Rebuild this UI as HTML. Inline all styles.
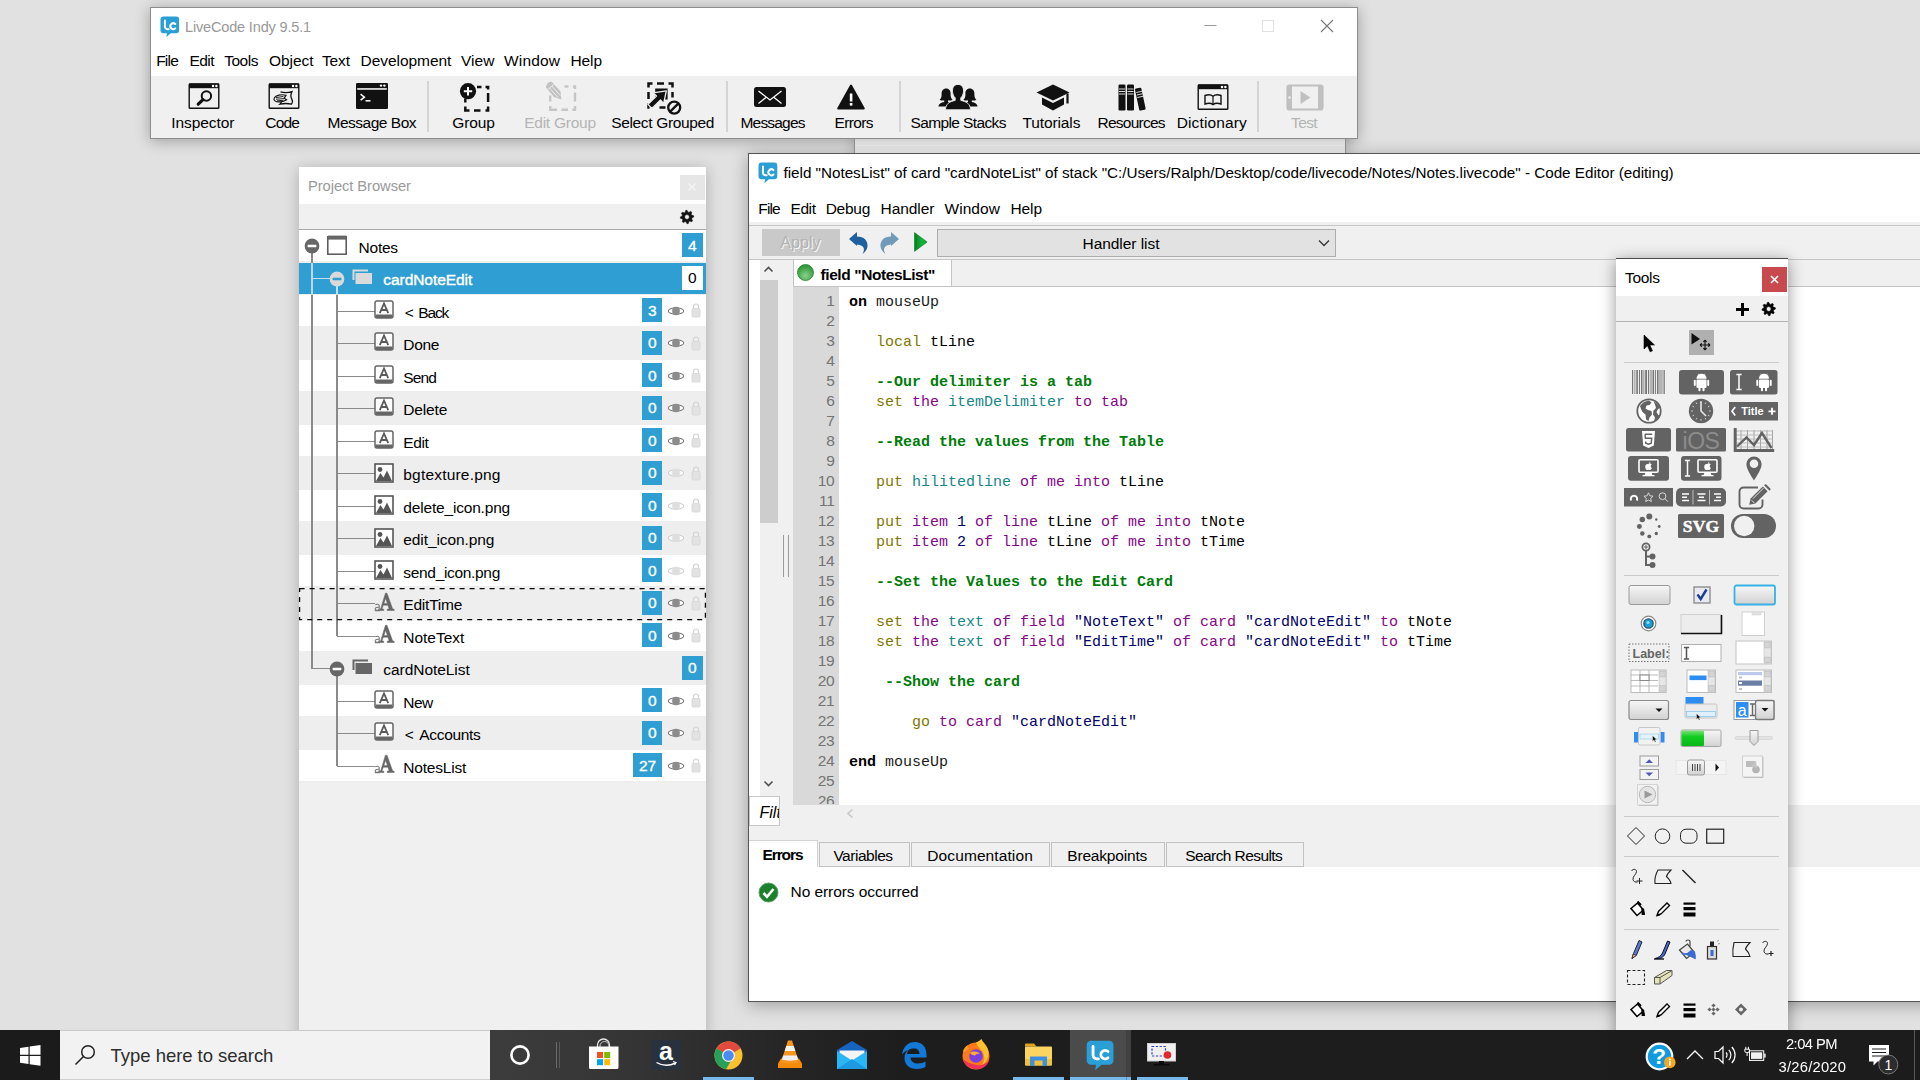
<!DOCTYPE html>
<html lang="en"><head><meta charset="utf-8"><title>LiveCode Indy 9.5.1</title>
<style>
html,body{margin:0;padding:0}
body{width:1920px;height:1080px;overflow:hidden;position:relative;background:#e1e1e1;font-family:"Liberation Sans",sans-serif}
div,span,svg{position:absolute;box-sizing:border-box}
.t{white-space:pre;font-family:"Liberation Sans",sans-serif}
.m{font-family:"Liberation Mono",monospace}
.w{overflow:hidden}
svg{overflow:visible}
</style></head>
<body>
<!-- background window -->
<div style="left:854px;top:120px;width:492px;height:40px;background:#dcdcdc;border:1px solid #8a8a8a;box-shadow:0 0 12px rgba(0,0,0,.2)"></div>
<div style="left:855px;top:145px;width:490px;height:1px;background:#e6e6e6"></div>
<!-- project browser -->
<div style="left:299px;top:167px;width:407px;height:870px;background:#f0f0f0;box-shadow:0 2px 14px rgba(0,0,0,.24)"></div>
<div style="left:299px;top:167px;width:407px;height:37px;background:#fff;"></div>
<span class="t" style="left:308.0px;top:176.9px;font-size:14.75px;line-height:18px;color:#9a9a9a;letter-spacing:-0.08px;">Project Browser</span>
<div style="left:680px;top:175px;width:25px;height:24.5px;background:#e6e6e6;"></div>
<svg style="left:686px;top:181px" width="12" height="12" viewBox="0 0 12 12"><path d="M2.5 2.5l7 7M9.5 2.5l-7 7" stroke="#f6f6f6" stroke-width="1.3"/></svg>
<div style="left:299px;top:229px;width:407px;height:1px;background:#a8a8a8;"></div>
<svg style="left:0;top:0" width="1" height="1"><path d="M693.57,215.69L693.70,217.00L691.86,217.97L691.58,218.90L692.57,220.72L691.74,221.74L689.75,221.12L688.90,221.58L688.31,223.57L687.00,223.70L686.03,221.86L685.10,221.58L683.28,222.57L682.26,221.74L682.88,219.75L682.42,218.90L680.43,218.31L680.30,217.00L682.14,216.03L682.42,215.10L681.43,213.28L682.26,212.26L684.25,212.88L685.10,212.42L685.69,210.43L687.00,210.30L687.97,212.14L688.90,212.42L690.72,211.43L691.74,212.26L691.12,214.25L691.58,215.10ZM689.41,217.00A2.41,2.41 0 1 0 684.59,217.00A2.41,2.41 0 1 0 689.41,217.00Z" fill="#111" fill-rule="evenodd" stroke="#111" stroke-width=".6" stroke-linejoin="round"/></svg>
<div style="left:299px;top:230px;width:407px;height:552.5px;background:#eeeeee;"></div>
<div style="left:299px;top:230.0px;width:407px;height:31.25px;background:#fff;"></div>
<div style="left:299px;top:262.5px;width:407px;height:31.25px;background:#2f9ed2;"></div>
<div style="left:299px;top:295.0px;width:407px;height:31.25px;background:#fff;"></div>
<div style="left:299px;top:360.0px;width:407px;height:31.25px;background:#fff;"></div>
<div style="left:299px;top:425.0px;width:407px;height:31.25px;background:#fff;"></div>
<div style="left:299px;top:490.0px;width:407px;height:31.25px;background:#fff;"></div>
<div style="left:299px;top:555.0px;width:407px;height:31.25px;background:#fff;"></div>
<div style="left:299px;top:620.0px;width:407px;height:31.25px;background:#fff;"></div>
<div style="left:299px;top:685.0px;width:407px;height:31.25px;background:#fff;"></div>
<div style="left:299px;top:750.0px;width:407px;height:31.25px;background:#fff;"></div>
<div style="left:311.1px;top:245.8px;width:1.8px;height:423.09999999999997px;background:#8a8a8a;"></div>
<div style="left:311px;top:277.5px;width:26px;height:1.6px;background:#8a8a8a;"></div>
<div style="left:311px;top:667.5px;width:26px;height:1.6px;background:#8a8a8a;"></div>
<div style="left:336.1px;top:278.3px;width:1.7px;height:358.09999999999997px;background:#8a8a8a;"></div>
<div style="left:336.1px;top:668.3px;width:1.7px;height:98.1px;background:#8a8a8a;"></div>
<div style="left:311.1px;top:262.5px;width:1.8px;height:32.5px;background:#b9d9ea;"></div>
<div style="left:311px;top:277.5px;width:26px;height:1.6px;background:#c4dfee;"></div>
<div style="left:336.1px;top:278.3px;width:1.7px;height:16.25px;background:#c4dfee;"></div>
<div style="left:337px;top:310.75px;width:38px;height:1.5px;background:#8a8a8a;"></div>
<div style="left:337px;top:342.75px;width:38px;height:1.5px;background:#8a8a8a;"></div>
<div style="left:337px;top:375.75px;width:38px;height:1.5px;background:#8a8a8a;"></div>
<div style="left:337px;top:407.75px;width:38px;height:1.5px;background:#8a8a8a;"></div>
<div style="left:337px;top:440.75px;width:38px;height:1.5px;background:#8a8a8a;"></div>
<div style="left:337px;top:472.75px;width:38px;height:1.5px;background:#8a8a8a;"></div>
<div style="left:337px;top:505.75px;width:38px;height:1.5px;background:#8a8a8a;"></div>
<div style="left:337px;top:537.75px;width:38px;height:1.5px;background:#8a8a8a;"></div>
<div style="left:337px;top:570.75px;width:38px;height:1.5px;background:#8a8a8a;"></div>
<div style="left:337px;top:602.75px;width:38px;height:1.5px;background:#8a8a8a;"></div>
<div style="left:337px;top:635.75px;width:38px;height:1.5px;background:#8a8a8a;"></div>
<div style="left:337px;top:700.75px;width:38px;height:1.5px;background:#8a8a8a;"></div>
<div style="left:337px;top:732.75px;width:38px;height:1.5px;background:#8a8a8a;"></div>
<div style="left:337px;top:765.75px;width:38px;height:1.5px;background:#8a8a8a;"></div>
<svg style="left:303.8px;top:238.0px" width="16" height="16" viewBox="0 0 16 16"><circle cx="8" cy="8" r="7.4" fill="#666"/><rect x="3.6" y="6.8" width="8.8" height="2.4" rx=".6" fill="#fff"/></svg>
<svg style="left:327px;top:235px" width="20" height="20" viewBox="0 0 20 20"><rect x=".8" y="1.8" width="18.4" height="17.4" fill="#fff" stroke="#555" stroke-width="1.5"/><rect x=".8" y=".6" width="18.4" height="4" fill="#666"/></svg>
<span class="t" style="left:358.6px;top:237.6px;font-size:15.5px;line-height:19px;color:#000;letter-spacing:-0.25px;">Notes</span>
<div style="left:682px;top:233.1px;width:20.5px;height:24.2px;background:#2f9ed2;"></div>
<span class="t" style="left:682.0px;top:235.8px;width:20.5px;text-align:center;font-size:15.5px;line-height:20px;color:#fff;-webkit-text-stroke:.35px #fff;letter-spacing:-.2px">4</span>
<svg style="left:328.5px;top:270.6px" width="16" height="16" viewBox="0 0 16 16"><circle cx="8" cy="8" r="7.4" fill="#d9d9d9"/><rect x="3.6" y="6.8" width="8.8" height="2.4" rx=".6" fill="#2f9ed2"/></svg>
<svg style="left:352px;top:269.3px" width="21" height="16" viewBox="0 0 21 16"><path d="M0.5 0.5h15.5v2h-13.5v8.5h-2z" fill="#dadada"/><rect x="3.5" y="4" width="16.5" height="11" fill="#dadada"/></svg>
<span class="t" style="left:383.3px;top:270.1px;font-size:15.5px;line-height:19px;color:#fff;letter-spacing:-0.06px;-webkit-text-stroke:.4px #fff;">cardNoteEdit</span>
<div style="left:682px;top:265.6px;width:20.5px;height:24.2px;background:#fff;"></div>
<span class="t" style="left:682.0px;top:268.3px;width:20.5px;text-align:center;font-size:15.5px;line-height:20px;color:#000;letter-spacing:-.2px">0</span>
<svg style="left:374px;top:299.8px" width="20" height="19" viewBox="0 0 20 19"><rect x="1" y="1" width="18" height="17" rx="2" fill="#fff" stroke="#666" stroke-width="1.5"/><path d="M1.5 14.5h17v1.5a2 2 0 0 1-2 2h-13a2 2 0 0 1-2-2z" fill="#666"/><path d="M5.8 13.2l4.2-9.7 4.2 9.7M7.3 10h5.4" fill="none" stroke="#5a5a5a" stroke-width="1.8"/></svg>
<span class="t" style="left:404.8px;top:302.6px;font-size:15.5px;line-height:19px;color:#000;letter-spacing:-1.20px;word-spacing:2.6px;">&lt; Back</span>
<div style="left:642.0px;top:298.1px;width:20.2px;height:24.2px;background:#2f9ed2;"></div>
<span class="t" style="left:642.0px;top:300.8px;width:20.2px;text-align:center;font-size:15.5px;line-height:20px;color:#fff;-webkit-text-stroke:.35px #fff;letter-spacing:-.2px">3</span>
<svg style="left:667px;top:305.5px" width="18" height="10" viewBox="0 0 18 10"><ellipse cx="9" cy="5" rx="7.7" ry="3.3" fill="#fff" stroke="#7c7c7c" stroke-width="1.1"/><rect x="5.2" y=".8" width="7.6" height="8.4" rx="3.6" fill="#8c8c8c"/></svg>
<svg style="left:691px;top:302.3px" width="10" height="16" viewBox="0 0 10 16"><path d="M2.5 7V4.5a2.5 2.5 0 0 1 5 0V7" fill="none" stroke="#d4d4d4" stroke-width="1.2"/><rect x="1" y="6.5" width="8" height="8.5" rx="1" fill="#e2e2e2" stroke="#d6d6d6" stroke-width=".8"/></svg>
<svg style="left:374px;top:332.3px" width="20" height="19" viewBox="0 0 20 19"><rect x="1" y="1" width="18" height="17" rx="2" fill="#fff" stroke="#666" stroke-width="1.5"/><path d="M1.5 14.5h17v1.5a2 2 0 0 1-2 2h-13a2 2 0 0 1-2-2z" fill="#666"/><path d="M5.8 13.2l4.2-9.7 4.2 9.7M7.3 10h5.4" fill="none" stroke="#5a5a5a" stroke-width="1.8"/></svg>
<span class="t" style="left:403.3px;top:335.1px;font-size:15.5px;line-height:19px;color:#000;letter-spacing:-0.35px;">Done</span>
<div style="left:642.0px;top:330.6px;width:20.2px;height:24.2px;background:#2f9ed2;"></div>
<span class="t" style="left:642.0px;top:333.3px;width:20.2px;text-align:center;font-size:15.5px;line-height:20px;color:#fff;-webkit-text-stroke:.35px #fff;letter-spacing:-.2px">0</span>
<svg style="left:667px;top:338.0px" width="18" height="10" viewBox="0 0 18 10"><ellipse cx="9" cy="5" rx="7.7" ry="3.3" fill="#fff" stroke="#7c7c7c" stroke-width="1.1"/><rect x="5.2" y=".8" width="7.6" height="8.4" rx="3.6" fill="#8c8c8c"/></svg>
<svg style="left:691px;top:334.8px" width="10" height="16" viewBox="0 0 10 16"><path d="M2.5 7V4.5a2.5 2.5 0 0 1 5 0V7" fill="none" stroke="#d4d4d4" stroke-width="1.2"/><rect x="1" y="6.5" width="8" height="8.5" rx="1" fill="#e2e2e2" stroke="#d6d6d6" stroke-width=".8"/></svg>
<svg style="left:374px;top:364.8px" width="20" height="19" viewBox="0 0 20 19"><rect x="1" y="1" width="18" height="17" rx="2" fill="#fff" stroke="#666" stroke-width="1.5"/><path d="M1.5 14.5h17v1.5a2 2 0 0 1-2 2h-13a2 2 0 0 1-2-2z" fill="#666"/><path d="M5.8 13.2l4.2-9.7 4.2 9.7M7.3 10h5.4" fill="none" stroke="#5a5a5a" stroke-width="1.8"/></svg>
<span class="t" style="left:403.3px;top:367.6px;font-size:15.5px;line-height:19px;color:#000;letter-spacing:-0.89px;">Send</span>
<div style="left:642.0px;top:363.1px;width:20.2px;height:24.2px;background:#2f9ed2;"></div>
<span class="t" style="left:642.0px;top:365.8px;width:20.2px;text-align:center;font-size:15.5px;line-height:20px;color:#fff;-webkit-text-stroke:.35px #fff;letter-spacing:-.2px">0</span>
<svg style="left:667px;top:370.5px" width="18" height="10" viewBox="0 0 18 10"><ellipse cx="9" cy="5" rx="7.7" ry="3.3" fill="#fff" stroke="#7c7c7c" stroke-width="1.1"/><rect x="5.2" y=".8" width="7.6" height="8.4" rx="3.6" fill="#8c8c8c"/></svg>
<svg style="left:691px;top:367.3px" width="10" height="16" viewBox="0 0 10 16"><path d="M2.5 7V4.5a2.5 2.5 0 0 1 5 0V7" fill="none" stroke="#d4d4d4" stroke-width="1.2"/><rect x="1" y="6.5" width="8" height="8.5" rx="1" fill="#e2e2e2" stroke="#d6d6d6" stroke-width=".8"/></svg>
<svg style="left:374px;top:397.3px" width="20" height="19" viewBox="0 0 20 19"><rect x="1" y="1" width="18" height="17" rx="2" fill="#fff" stroke="#666" stroke-width="1.5"/><path d="M1.5 14.5h17v1.5a2 2 0 0 1-2 2h-13a2 2 0 0 1-2-2z" fill="#666"/><path d="M5.8 13.2l4.2-9.7 4.2 9.7M7.3 10h5.4" fill="none" stroke="#5a5a5a" stroke-width="1.8"/></svg>
<span class="t" style="left:403.3px;top:400.1px;font-size:15.5px;line-height:19px;color:#000;letter-spacing:-0.16px;">Delete</span>
<div style="left:642.0px;top:395.6px;width:20.2px;height:24.2px;background:#2f9ed2;"></div>
<span class="t" style="left:642.0px;top:398.3px;width:20.2px;text-align:center;font-size:15.5px;line-height:20px;color:#fff;-webkit-text-stroke:.35px #fff;letter-spacing:-.2px">0</span>
<svg style="left:667px;top:403.0px" width="18" height="10" viewBox="0 0 18 10"><ellipse cx="9" cy="5" rx="7.7" ry="3.3" fill="#fff" stroke="#7c7c7c" stroke-width="1.1"/><rect x="5.2" y=".8" width="7.6" height="8.4" rx="3.6" fill="#8c8c8c"/></svg>
<svg style="left:691px;top:399.8px" width="10" height="16" viewBox="0 0 10 16"><path d="M2.5 7V4.5a2.5 2.5 0 0 1 5 0V7" fill="none" stroke="#d4d4d4" stroke-width="1.2"/><rect x="1" y="6.5" width="8" height="8.5" rx="1" fill="#e2e2e2" stroke="#d6d6d6" stroke-width=".8"/></svg>
<svg style="left:374px;top:429.8px" width="20" height="19" viewBox="0 0 20 19"><rect x="1" y="1" width="18" height="17" rx="2" fill="#fff" stroke="#666" stroke-width="1.5"/><path d="M1.5 14.5h17v1.5a2 2 0 0 1-2 2h-13a2 2 0 0 1-2-2z" fill="#666"/><path d="M5.8 13.2l4.2-9.7 4.2 9.7M7.3 10h5.4" fill="none" stroke="#5a5a5a" stroke-width="1.8"/></svg>
<span class="t" style="left:403.3px;top:432.6px;font-size:15.5px;line-height:19px;color:#000;letter-spacing:-0.42px;">Edit</span>
<div style="left:642.0px;top:428.1px;width:20.2px;height:24.2px;background:#2f9ed2;"></div>
<span class="t" style="left:642.0px;top:430.8px;width:20.2px;text-align:center;font-size:15.5px;line-height:20px;color:#fff;-webkit-text-stroke:.35px #fff;letter-spacing:-.2px">0</span>
<svg style="left:667px;top:435.5px" width="18" height="10" viewBox="0 0 18 10"><ellipse cx="9" cy="5" rx="7.7" ry="3.3" fill="#fff" stroke="#7c7c7c" stroke-width="1.1"/><rect x="5.2" y=".8" width="7.6" height="8.4" rx="3.6" fill="#8c8c8c"/></svg>
<svg style="left:691px;top:432.3px" width="10" height="16" viewBox="0 0 10 16"><path d="M2.5 7V4.5a2.5 2.5 0 0 1 5 0V7" fill="none" stroke="#d4d4d4" stroke-width="1.2"/><rect x="1" y="6.5" width="8" height="8.5" rx="1" fill="#e2e2e2" stroke="#d6d6d6" stroke-width=".8"/></svg>
<svg style="left:374px;top:462.8px" width="20" height="20" viewBox="0 0 20 20"><rect x="1" y="1" width="18" height="18" fill="#fff" stroke="#555" stroke-width="1.6"/><circle cx="6" cy="6.5" r="2.4" fill="#555"/><path d="M2 18l4.5-8 3 4.5 3.5-7 5 10.5z" fill="#555"/></svg>
<span class="t" style="left:403.3px;top:465.1px;font-size:15.5px;line-height:19px;color:#000;letter-spacing:0.19px;">bgtexture.png</span>
<div style="left:642.0px;top:460.6px;width:20.2px;height:24.2px;background:#2f9ed2;"></div>
<span class="t" style="left:642.0px;top:463.3px;width:20.2px;text-align:center;font-size:15.5px;line-height:20px;color:#fff;-webkit-text-stroke:.35px #fff;letter-spacing:-.2px">0</span>
<svg style="left:667px;top:468.0px" width="18" height="10" viewBox="0 0 18 10"><ellipse cx="9" cy="5" rx="7.7" ry="3.3" fill="#fff" stroke="#cfcfcf" stroke-width="1.1"/><rect x="5.2" y=".8" width="7.6" height="8.4" rx="3.6" fill="#dedede"/></svg>
<svg style="left:691px;top:464.8px" width="10" height="16" viewBox="0 0 10 16"><path d="M2.5 7V4.5a2.5 2.5 0 0 1 5 0V7" fill="none" stroke="#d4d4d4" stroke-width="1.2"/><rect x="1" y="6.5" width="8" height="8.5" rx="1" fill="#e2e2e2" stroke="#d6d6d6" stroke-width=".8"/></svg>
<svg style="left:374px;top:495.3px" width="20" height="20" viewBox="0 0 20 20"><rect x="1" y="1" width="18" height="18" fill="#fff" stroke="#555" stroke-width="1.6"/><circle cx="6" cy="6.5" r="2.4" fill="#555"/><path d="M2 18l4.5-8 3 4.5 3.5-7 5 10.5z" fill="#555"/></svg>
<span class="t" style="left:403.3px;top:497.6px;font-size:15.5px;line-height:19px;color:#000;letter-spacing:-0.18px;">delete_icon.png</span>
<div style="left:642.0px;top:493.1px;width:20.2px;height:24.2px;background:#2f9ed2;"></div>
<span class="t" style="left:642.0px;top:495.8px;width:20.2px;text-align:center;font-size:15.5px;line-height:20px;color:#fff;-webkit-text-stroke:.35px #fff;letter-spacing:-.2px">0</span>
<svg style="left:667px;top:500.5px" width="18" height="10" viewBox="0 0 18 10"><ellipse cx="9" cy="5" rx="7.7" ry="3.3" fill="#fff" stroke="#cfcfcf" stroke-width="1.1"/><rect x="5.2" y=".8" width="7.6" height="8.4" rx="3.6" fill="#dedede"/></svg>
<svg style="left:691px;top:497.3px" width="10" height="16" viewBox="0 0 10 16"><path d="M2.5 7V4.5a2.5 2.5 0 0 1 5 0V7" fill="none" stroke="#d4d4d4" stroke-width="1.2"/><rect x="1" y="6.5" width="8" height="8.5" rx="1" fill="#e2e2e2" stroke="#d6d6d6" stroke-width=".8"/></svg>
<svg style="left:374px;top:527.8px" width="20" height="20" viewBox="0 0 20 20"><rect x="1" y="1" width="18" height="18" fill="#fff" stroke="#555" stroke-width="1.6"/><circle cx="6" cy="6.5" r="2.4" fill="#555"/><path d="M2 18l4.5-8 3 4.5 3.5-7 5 10.5z" fill="#555"/></svg>
<span class="t" style="left:403.3px;top:530.1px;font-size:15.5px;line-height:19px;color:#000;letter-spacing:-0.10px;">edit_icon.png</span>
<div style="left:642.0px;top:525.6px;width:20.2px;height:24.2px;background:#2f9ed2;"></div>
<span class="t" style="left:642.0px;top:528.3px;width:20.2px;text-align:center;font-size:15.5px;line-height:20px;color:#fff;-webkit-text-stroke:.35px #fff;letter-spacing:-.2px">0</span>
<svg style="left:667px;top:533.0px" width="18" height="10" viewBox="0 0 18 10"><ellipse cx="9" cy="5" rx="7.7" ry="3.3" fill="#fff" stroke="#cfcfcf" stroke-width="1.1"/><rect x="5.2" y=".8" width="7.6" height="8.4" rx="3.6" fill="#dedede"/></svg>
<svg style="left:691px;top:529.8px" width="10" height="16" viewBox="0 0 10 16"><path d="M2.5 7V4.5a2.5 2.5 0 0 1 5 0V7" fill="none" stroke="#d4d4d4" stroke-width="1.2"/><rect x="1" y="6.5" width="8" height="8.5" rx="1" fill="#e2e2e2" stroke="#d6d6d6" stroke-width=".8"/></svg>
<svg style="left:374px;top:560.3px" width="20" height="20" viewBox="0 0 20 20"><rect x="1" y="1" width="18" height="18" fill="#fff" stroke="#555" stroke-width="1.6"/><circle cx="6" cy="6.5" r="2.4" fill="#555"/><path d="M2 18l4.5-8 3 4.5 3.5-7 5 10.5z" fill="#555"/></svg>
<span class="t" style="left:403.3px;top:562.6px;font-size:15.5px;line-height:19px;color:#000;letter-spacing:-0.32px;">send_icon.png</span>
<div style="left:642.0px;top:558.1px;width:20.2px;height:24.2px;background:#2f9ed2;"></div>
<span class="t" style="left:642.0px;top:560.8px;width:20.2px;text-align:center;font-size:15.5px;line-height:20px;color:#fff;-webkit-text-stroke:.35px #fff;letter-spacing:-.2px">0</span>
<svg style="left:667px;top:565.5px" width="18" height="10" viewBox="0 0 18 10"><ellipse cx="9" cy="5" rx="7.7" ry="3.3" fill="#fff" stroke="#cfcfcf" stroke-width="1.1"/><rect x="5.2" y=".8" width="7.6" height="8.4" rx="3.6" fill="#dedede"/></svg>
<svg style="left:691px;top:562.3px" width="10" height="16" viewBox="0 0 10 16"><path d="M2.5 7V4.5a2.5 2.5 0 0 1 5 0V7" fill="none" stroke="#d4d4d4" stroke-width="1.2"/><rect x="1" y="6.5" width="8" height="8.5" rx="1" fill="#e2e2e2" stroke="#d6d6d6" stroke-width=".8"/></svg>
<svg style="left:374px;top:591.8px" width="21" height="20" viewBox="0 0 21 20"><path d="M11.4 1.2h1.6l5.6 15.6 1.6.5v1.2h-7v-1.2l1.9-.5-1.2-3.6H9.3l-1.3 3.6 1.8.5v1.2H5.3v-1.2l1.4-.500zM9.9 11.6h3.5l-1.8-5.4z" fill="#666" stroke="#666" stroke-width=".5"/><path d="M1.3 12.8c1.6-.900 3.9-.700 3.9 1v4.6M5.2 15.3c-2.2-.200-4 .300-4 1.7 0 1.6 2.8 1.8 4 .300M.8 18.6h5.2" fill="none" stroke="#777" stroke-width="1.1"/></svg>
<span class="t" style="left:403.3px;top:595.1px;font-size:15.5px;line-height:19px;color:#000;letter-spacing:-0.22px;">EditTime</span>
<div style="left:642.0px;top:590.6px;width:20.2px;height:24.2px;background:#2f9ed2;"></div>
<span class="t" style="left:642.0px;top:593.3px;width:20.2px;text-align:center;font-size:15.5px;line-height:20px;color:#fff;-webkit-text-stroke:.35px #fff;letter-spacing:-.2px">0</span>
<svg style="left:667px;top:598.0px" width="18" height="10" viewBox="0 0 18 10"><ellipse cx="9" cy="5" rx="7.7" ry="3.3" fill="#fff" stroke="#7c7c7c" stroke-width="1.1"/><rect x="5.2" y=".8" width="7.6" height="8.4" rx="3.6" fill="#8c8c8c"/></svg>
<svg style="left:691px;top:594.8px" width="10" height="16" viewBox="0 0 10 16"><path d="M2.5 7V4.5a2.5 2.5 0 0 1 5 0V7" fill="none" stroke="#d4d4d4" stroke-width="1.2"/><rect x="1" y="6.5" width="8" height="8.5" rx="1" fill="#e2e2e2" stroke="#d6d6d6" stroke-width=".8"/></svg>
<svg style="left:374px;top:624.3px" width="21" height="20" viewBox="0 0 21 20"><path d="M11.4 1.2h1.6l5.6 15.6 1.6.5v1.2h-7v-1.2l1.9-.5-1.2-3.6H9.3l-1.3 3.6 1.8.5v1.2H5.3v-1.2l1.4-.500zM9.9 11.6h3.5l-1.8-5.4z" fill="#666" stroke="#666" stroke-width=".5"/><path d="M1.3 12.8c1.6-.900 3.9-.700 3.9 1v4.6M5.2 15.3c-2.2-.200-4 .300-4 1.7 0 1.6 2.8 1.8 4 .300M.8 18.6h5.2" fill="none" stroke="#777" stroke-width="1.1"/></svg>
<span class="t" style="left:403.3px;top:627.6px;font-size:15.5px;line-height:19px;color:#000;letter-spacing:-0.03px;">NoteText</span>
<div style="left:642.0px;top:623.1px;width:20.2px;height:24.2px;background:#2f9ed2;"></div>
<span class="t" style="left:642.0px;top:625.8px;width:20.2px;text-align:center;font-size:15.5px;line-height:20px;color:#fff;-webkit-text-stroke:.35px #fff;letter-spacing:-.2px">0</span>
<svg style="left:667px;top:630.5px" width="18" height="10" viewBox="0 0 18 10"><ellipse cx="9" cy="5" rx="7.7" ry="3.3" fill="#fff" stroke="#7c7c7c" stroke-width="1.1"/><rect x="5.2" y=".8" width="7.6" height="8.4" rx="3.6" fill="#8c8c8c"/></svg>
<svg style="left:691px;top:627.3px" width="10" height="16" viewBox="0 0 10 16"><path d="M2.5 7V4.5a2.5 2.5 0 0 1 5 0V7" fill="none" stroke="#d4d4d4" stroke-width="1.2"/><rect x="1" y="6.5" width="8" height="8.5" rx="1" fill="#e2e2e2" stroke="#d6d6d6" stroke-width=".8"/></svg>
<svg style="left:328.5px;top:660.5999999999999px" width="16" height="16" viewBox="0 0 16 16"><circle cx="8" cy="8" r="7.4" fill="#666"/><rect x="3.6" y="6.8" width="8.8" height="2.4" rx=".6" fill="#fff"/></svg>
<svg style="left:352px;top:659.3px" width="21" height="16" viewBox="0 0 21 16"><path d="M0.5 0.5h15.5v2h-13.5v8.5h-2z" fill="#666"/><rect x="3.5" y="4" width="16.5" height="11" fill="#666"/></svg>
<span class="t" style="left:383.3px;top:660.1px;font-size:15.5px;line-height:19px;color:#000;letter-spacing:-0.05px;">cardNoteList</span>
<div style="left:682px;top:655.6px;width:20.5px;height:24.2px;background:#2f9ed2;"></div>
<span class="t" style="left:682.0px;top:658.3px;width:20.5px;text-align:center;font-size:15.5px;line-height:20px;color:#fff;-webkit-text-stroke:.35px #fff;letter-spacing:-.2px">0</span>
<svg style="left:374px;top:689.8px" width="20" height="19" viewBox="0 0 20 19"><rect x="1" y="1" width="18" height="17" rx="2" fill="#fff" stroke="#666" stroke-width="1.5"/><path d="M1.5 14.5h17v1.5a2 2 0 0 1-2 2h-13a2 2 0 0 1-2-2z" fill="#666"/><path d="M5.8 13.2l4.2-9.7 4.2 9.7M7.3 10h5.4" fill="none" stroke="#5a5a5a" stroke-width="1.8"/></svg>
<span class="t" style="left:403.3px;top:692.6px;font-size:15.5px;line-height:19px;color:#000;letter-spacing:-0.53px;">New</span>
<div style="left:642.0px;top:688.1px;width:20.2px;height:24.2px;background:#2f9ed2;"></div>
<span class="t" style="left:642.0px;top:690.8px;width:20.2px;text-align:center;font-size:15.5px;line-height:20px;color:#fff;-webkit-text-stroke:.35px #fff;letter-spacing:-.2px">0</span>
<svg style="left:667px;top:695.5px" width="18" height="10" viewBox="0 0 18 10"><ellipse cx="9" cy="5" rx="7.7" ry="3.3" fill="#fff" stroke="#7c7c7c" stroke-width="1.1"/><rect x="5.2" y=".8" width="7.6" height="8.4" rx="3.6" fill="#8c8c8c"/></svg>
<svg style="left:691px;top:692.3px" width="10" height="16" viewBox="0 0 10 16"><path d="M2.5 7V4.5a2.5 2.5 0 0 1 5 0V7" fill="none" stroke="#d4d4d4" stroke-width="1.2"/><rect x="1" y="6.5" width="8" height="8.5" rx="1" fill="#e2e2e2" stroke="#d6d6d6" stroke-width=".8"/></svg>
<svg style="left:374px;top:722.3px" width="20" height="19" viewBox="0 0 20 19"><rect x="1" y="1" width="18" height="17" rx="2" fill="#fff" stroke="#666" stroke-width="1.5"/><path d="M1.5 14.5h17v1.5a2 2 0 0 1-2 2h-13a2 2 0 0 1-2-2z" fill="#666"/><path d="M5.8 13.2l4.2-9.7 4.2 9.7M7.3 10h5.4" fill="none" stroke="#5a5a5a" stroke-width="1.8"/></svg>
<span class="t" style="left:404.8px;top:725.1px;font-size:15.5px;line-height:19px;color:#000;letter-spacing:-0.32px;word-spacing:2.6px;">&lt; Accounts</span>
<div style="left:642.0px;top:720.6px;width:20.2px;height:24.2px;background:#2f9ed2;"></div>
<span class="t" style="left:642.0px;top:723.3px;width:20.2px;text-align:center;font-size:15.5px;line-height:20px;color:#fff;-webkit-text-stroke:.35px #fff;letter-spacing:-.2px">0</span>
<svg style="left:667px;top:728.0px" width="18" height="10" viewBox="0 0 18 10"><ellipse cx="9" cy="5" rx="7.7" ry="3.3" fill="#fff" stroke="#7c7c7c" stroke-width="1.1"/><rect x="5.2" y=".8" width="7.6" height="8.4" rx="3.6" fill="#8c8c8c"/></svg>
<svg style="left:691px;top:724.8px" width="10" height="16" viewBox="0 0 10 16"><path d="M2.5 7V4.5a2.5 2.5 0 0 1 5 0V7" fill="none" stroke="#d4d4d4" stroke-width="1.2"/><rect x="1" y="6.5" width="8" height="8.5" rx="1" fill="#e2e2e2" stroke="#d6d6d6" stroke-width=".8"/></svg>
<svg style="left:374px;top:754.3px" width="21" height="20" viewBox="0 0 21 20"><path d="M11.4 1.2h1.6l5.6 15.6 1.6.5v1.2h-7v-1.2l1.9-.5-1.2-3.6H9.3l-1.3 3.6 1.8.5v1.2H5.3v-1.2l1.4-.500zM9.9 11.6h3.5l-1.8-5.4z" fill="#666" stroke="#666" stroke-width=".5"/><path d="M1.3 12.8c1.6-.900 3.9-.700 3.9 1v4.6M5.2 15.3c-2.2-.200-4 .300-4 1.7 0 1.6 2.8 1.8 4 .300M.8 18.6h5.2" fill="none" stroke="#777" stroke-width="1.1"/></svg>
<span class="t" style="left:403.3px;top:757.6px;font-size:15.5px;line-height:19px;color:#000;letter-spacing:-0.21px;">NotesList</span>
<div style="left:632.7px;top:753.1px;width:29.5px;height:24.2px;background:#2f9ed2;"></div>
<span class="t" style="left:632.7px;top:755.8px;width:29.5px;text-align:center;font-size:15.5px;line-height:20px;color:#fff;-webkit-text-stroke:.35px #fff;letter-spacing:-.2px">27</span>
<svg style="left:667px;top:760.5px" width="18" height="10" viewBox="0 0 18 10"><ellipse cx="9" cy="5" rx="7.7" ry="3.3" fill="#fff" stroke="#7c7c7c" stroke-width="1.1"/><rect x="5.2" y=".8" width="7.6" height="8.4" rx="3.6" fill="#8c8c8c"/></svg>
<svg style="left:691px;top:757.3px" width="10" height="16" viewBox="0 0 10 16"><path d="M2.5 7V4.5a2.5 2.5 0 0 1 5 0V7" fill="none" stroke="#d4d4d4" stroke-width="1.2"/><rect x="1" y="6.5" width="8" height="8.5" rx="1" fill="#e2e2e2" stroke="#d6d6d6" stroke-width=".8"/></svg>
<svg style="left:299px;top:588px" width="407" height="32"><rect x=".6" y=".5" width="405.8" height="31" fill="none" stroke="#000" stroke-width="1.25" stroke-dasharray="5 5"/></svg>
<!-- code editor -->
<div style="left:748px;top:153px;width:1200px;height:849px;background:#fff;border:1px solid #555;box-shadow:0 3px 16px rgba(0,0,0,.3)"></div>
<svg style="left:758.2px;top:161.8px" width="19.8" height="21.8" viewBox="0 0 20 22"><path d="M3.5 0.5h13a3 3 0 0 1 3 3v11a3 3 0 0 1-3 3H11l-4.5 4 .6-4H3.5a3 3 0 0 1-3-3v-11a3 3 0 0 1 3-3z" fill="#2a9fd6"/><path d="M5 4.5v6.3a2.6 2.6 0 0 0 2.6 2.6h1.2M15.6 8.2a3 3 0 1 0 0 4.4" stroke="#fff" stroke-width="2" fill="none" stroke-linecap="round"/></svg>
<span class="t" style="left:783.5px;top:163.2px;font-size:15.25px;line-height:19px;color:#000;letter-spacing:-0.02px;">field "NotesList" of card "cardNoteList" of stack "C:/Users/Ralph/Desktop/code/livecode/Notes/Notes.livecode" - Code Editor (editing)</span>
<span class="t" style="left:758.3px;top:199.1px;font-size:15.5px;line-height:19px;color:#000;letter-spacing:-0.86px;">File</span>
<span class="t" style="left:790.5px;top:199.1px;font-size:15.5px;line-height:19px;color:#000;letter-spacing:-0.42px;">Edit</span>
<span class="t" style="left:825.7px;top:199.1px;font-size:15.5px;line-height:19px;color:#000;letter-spacing:-0.27px;">Debug</span>
<span class="t" style="left:880.5px;top:199.1px;font-size:15.5px;line-height:19px;color:#000;letter-spacing:-0.05px;">Handler</span>
<span class="t" style="left:944.5px;top:199.1px;font-size:15.5px;line-height:19px;color:#000;letter-spacing:0.06px;">Window</span>
<span class="t" style="left:1010.5px;top:199.1px;font-size:15.5px;line-height:19px;color:#000;letter-spacing:-0.12px;">Help</span>
<div style="left:749px;top:222px;width:1171px;height:38px;background:#f0f0f0;"></div>
<div style="left:749px;top:225px;width:1171px;height:1px;background:#c6c6c6;"></div>
<div style="left:762px;top:229px;width:78px;height:27px;background:#c9c9c9;"></div>
<span class="t" style="left:780.3px;top:233.1px;font-size:16px;line-height:20px;color:#b2b2b2;letter-spacing:0.04px;text-shadow:1px 1px 0 #f8f8f8;">Apply</span>
<svg style="left:848px;top:231px" width="22" height="24" viewBox="0 0 22 24"><path d="M1 8l8-7v4.5c7 0 11 4 10.5 10-.5 3.5-3 6-5 7.5 2.5-4 2.5-9-5.5-9.5V15z" fill="#1d5f9f"/></svg>
<svg style="left:878px;top:231px" width="22" height="24" viewBox="0 0 22 24"><path d="M21 8l-8-7v4.5c-7 0-11 4-10.5 10 .5 3.5 3 6 5 7.5-2.5-4-2.5-9 5.5-9.5V15z" fill="#6f9bb8"/></svg>
<svg style="left:913px;top:231px" width="16" height="22" viewBox="0 0 16 22"><defs><linearGradient id="pg" x1="0" y1="0" x2="1" y2="0"><stop offset="0" stop-color="#0a7a22"/><stop offset=".6" stop-color="#12b83a"/><stop offset="1" stop-color="#0e9a2c"/></linearGradient></defs><path d="M1.5 1.6l12.6 9.4L1.5 20.4z" fill="url(#pg)" stroke="#0b7a22" stroke-width=".6"/></svg>
<div style="left:937px;top:229px;width:399px;height:28px;background:#e2e2e2;border:1px solid #adadad"></div>
<span class="t" style="left:1082.5px;top:234.1px;font-size:15.5px;line-height:19px;color:#000;letter-spacing:-0.05px;">Handler list</span>
<svg style="left:1317px;top:238px" width="14" height="10" viewBox="0 0 14 10"><path d="M2 2.5l5 5 5-5" fill="none" stroke="#333" stroke-width="1.3"/></svg>
<div style="left:749px;top:259px;width:1171px;height:1px;background:#c4c4c4;"></div>
<div style="left:760px;top:260px;width:1160px;height:27px;background:#f0f0f0;"></div>
<div style="left:793px;top:286px;width:1127px;height:1px;background:#c4c4c4;"></div>
<div style="left:793px;top:259px;width:159px;height:28px;background:#fff;border:1px solid #c4c4c4"></div>
<svg style="left:797px;top:264px" width="17" height="17" viewBox="0 0 17 17"><defs><radialGradient id="gb" cx=".5" cy=".7" r=".6"><stop offset="0" stop-color="#8ad18a"/><stop offset="1" stop-color="#2f9a3a"/></radialGradient></defs><circle cx="8.5" cy="8.5" r="8" fill="url(#gb)" stroke="#2a7f30" stroke-width=".8"/></svg>
<span class="t" style="left:820.5px;top:265.1px;font-size:15.5px;line-height:19px;color:#000;font-weight:700;letter-spacing:-0.41px;">field "NotesList"</span>
<div style="left:749px;top:260px;width:11px;height:536px;background:#fff;"></div>
<div style="left:760px;top:260px;width:18px;height:545px;background:#f0f0f0;"></div>
<div style="left:760px;top:280px;width:18px;height:243px;background:#cdcdcd;"></div>
<svg style="left:763px;top:265px" width="11" height="8" viewBox="0 0 11 8"><path d="M1.5 6.5l4-4 4 4" fill="none" stroke="#505050" stroke-width="1.6"/></svg>
<svg style="left:763px;top:780px" width="11" height="8" viewBox="0 0 11 8"><path d="M1.5 1.5l4 4 4-4" fill="none" stroke="#505050" stroke-width="1.6"/></svg>
<div style="left:778px;top:287px;width:15px;height:518px;background:#f0f0f0;"></div>
<div style="left:783px;top:535px;width:1.2px;height:42px;background:#9c9c9c;"></div>
<div style="left:788px;top:535px;width:1.2px;height:42px;background:#9c9c9c;"></div>
<div style="left:793px;top:287px;width:46px;height:517.5px;background:#d9d9d9;"></div>
<div style="left:839px;top:287px;width:1081px;height:517.8px;background:#fff;"></div>
<span class="t" style="left:793px;width:41.5px;text-align:right;top:290.8px;font-size:15.5px;line-height:20px;color:#747474;letter-spacing:-.25px">1</span>
<span class="t" style="left:793px;width:41.5px;text-align:right;top:310.8px;font-size:15.5px;line-height:20px;color:#747474;letter-spacing:-.25px">2</span>
<span class="t" style="left:793px;width:41.5px;text-align:right;top:330.8px;font-size:15.5px;line-height:20px;color:#747474;letter-spacing:-.25px">3</span>
<span class="t" style="left:793px;width:41.5px;text-align:right;top:350.8px;font-size:15.5px;line-height:20px;color:#747474;letter-spacing:-.25px">4</span>
<span class="t" style="left:793px;width:41.5px;text-align:right;top:370.8px;font-size:15.5px;line-height:20px;color:#747474;letter-spacing:-.25px">5</span>
<span class="t" style="left:793px;width:41.5px;text-align:right;top:390.8px;font-size:15.5px;line-height:20px;color:#747474;letter-spacing:-.25px">6</span>
<span class="t" style="left:793px;width:41.5px;text-align:right;top:410.8px;font-size:15.5px;line-height:20px;color:#747474;letter-spacing:-.25px">7</span>
<span class="t" style="left:793px;width:41.5px;text-align:right;top:430.8px;font-size:15.5px;line-height:20px;color:#747474;letter-spacing:-.25px">8</span>
<span class="t" style="left:793px;width:41.5px;text-align:right;top:450.8px;font-size:15.5px;line-height:20px;color:#747474;letter-spacing:-.25px">9</span>
<span class="t" style="left:793px;width:41.5px;text-align:right;top:470.8px;font-size:15.5px;line-height:20px;color:#747474;letter-spacing:-.25px">10</span>
<span class="t" style="left:793px;width:41.5px;text-align:right;top:490.8px;font-size:15.5px;line-height:20px;color:#747474;letter-spacing:-.25px">11</span>
<span class="t" style="left:793px;width:41.5px;text-align:right;top:510.8px;font-size:15.5px;line-height:20px;color:#747474;letter-spacing:-.25px">12</span>
<span class="t" style="left:793px;width:41.5px;text-align:right;top:530.8px;font-size:15.5px;line-height:20px;color:#747474;letter-spacing:-.25px">13</span>
<span class="t" style="left:793px;width:41.5px;text-align:right;top:550.8px;font-size:15.5px;line-height:20px;color:#747474;letter-spacing:-.25px">14</span>
<span class="t" style="left:793px;width:41.5px;text-align:right;top:570.8px;font-size:15.5px;line-height:20px;color:#747474;letter-spacing:-.25px">15</span>
<span class="t" style="left:793px;width:41.5px;text-align:right;top:590.8px;font-size:15.5px;line-height:20px;color:#747474;letter-spacing:-.25px">16</span>
<span class="t" style="left:793px;width:41.5px;text-align:right;top:610.8px;font-size:15.5px;line-height:20px;color:#747474;letter-spacing:-.25px">17</span>
<span class="t" style="left:793px;width:41.5px;text-align:right;top:630.8px;font-size:15.5px;line-height:20px;color:#747474;letter-spacing:-.25px">18</span>
<span class="t" style="left:793px;width:41.5px;text-align:right;top:650.8px;font-size:15.5px;line-height:20px;color:#747474;letter-spacing:-.25px">19</span>
<span class="t" style="left:793px;width:41.5px;text-align:right;top:670.8px;font-size:15.5px;line-height:20px;color:#747474;letter-spacing:-.25px">20</span>
<span class="t" style="left:793px;width:41.5px;text-align:right;top:690.8px;font-size:15.5px;line-height:20px;color:#747474;letter-spacing:-.25px">21</span>
<span class="t" style="left:793px;width:41.5px;text-align:right;top:710.8px;font-size:15.5px;line-height:20px;color:#747474;letter-spacing:-.25px">22</span>
<span class="t" style="left:793px;width:41.5px;text-align:right;top:730.8px;font-size:15.5px;line-height:20px;color:#747474;letter-spacing:-.25px">23</span>
<span class="t" style="left:793px;width:41.5px;text-align:right;top:750.8px;font-size:15.5px;line-height:20px;color:#747474;letter-spacing:-.25px">24</span>
<span class="t" style="left:793px;width:41.5px;text-align:right;top:770.8px;font-size:15.5px;line-height:20px;color:#747474;letter-spacing:-.25px">25</span>
<div class="w" style="left:793px;top:793.5px;width:46px;height:10.5px"><span class="t" style="right:4.5px;top:-2.7px;font-size:15.5px;line-height:20px;color:#747474;letter-spacing:-.25px">26</span></div>
<span class="t m" style="left:849px;top:293.0px;font-size:15px;line-height:19px;color:#000;font-weight:700;">on</span>
<span class="t m" style="left:876px;top:293.0px;font-size:15px;line-height:19px;color:#1a1a1a;">mouseUp</span>
<span class="t m" style="left:876px;top:333.0px;font-size:15px;line-height:19px;color:#807800;">local</span>
<span class="t m" style="left:930px;top:333.0px;font-size:15px;line-height:19px;color:#000;">tLine</span>
<span class="t m" style="left:876px;top:373.0px;font-size:15px;line-height:19px;color:#007c0a;font-weight:700;">--Our delimiter is a tab</span>
<span class="t m" style="left:876px;top:393.0px;font-size:15px;line-height:19px;color:#807800;">set</span>
<span class="t m" style="left:912px;top:393.0px;font-size:15px;line-height:19px;color:#86068a;">the</span>
<span class="t m" style="left:948px;top:393.0px;font-size:15px;line-height:19px;color:#16868a;">itemDelimiter</span>
<span class="t m" style="left:1074px;top:393.0px;font-size:15px;line-height:19px;color:#86068a;">to</span>
<span class="t m" style="left:1101px;top:393.0px;font-size:15px;line-height:19px;color:#86068a;">tab</span>
<span class="t m" style="left:876px;top:433.0px;font-size:15px;line-height:19px;color:#007c0a;font-weight:700;">--Read the values from the Table</span>
<span class="t m" style="left:876px;top:473.0px;font-size:15px;line-height:19px;color:#807800;">put</span>
<span class="t m" style="left:912px;top:473.0px;font-size:15px;line-height:19px;color:#16868a;">hilitedline</span>
<span class="t m" style="left:1020px;top:473.0px;font-size:15px;line-height:19px;color:#86068a;">of</span>
<span class="t m" style="left:1047px;top:473.0px;font-size:15px;line-height:19px;color:#86068a;">me</span>
<span class="t m" style="left:1074px;top:473.0px;font-size:15px;line-height:19px;color:#86068a;">into</span>
<span class="t m" style="left:1119px;top:473.0px;font-size:15px;line-height:19px;color:#000;">tLine</span>
<span class="t m" style="left:876px;top:513.0px;font-size:15px;line-height:19px;color:#807800;">put</span>
<span class="t m" style="left:912px;top:513.0px;font-size:15px;line-height:19px;color:#86068a;">item</span>
<span class="t m" style="left:957px;top:513.0px;font-size:15px;line-height:19px;color:#00006a;">1</span>
<span class="t m" style="left:975px;top:513.0px;font-size:15px;line-height:19px;color:#86068a;">of</span>
<span class="t m" style="left:1002px;top:513.0px;font-size:15px;line-height:19px;color:#86068a;">line</span>
<span class="t m" style="left:1047px;top:513.0px;font-size:15px;line-height:19px;color:#000;">tLine</span>
<span class="t m" style="left:1101px;top:513.0px;font-size:15px;line-height:19px;color:#86068a;">of</span>
<span class="t m" style="left:1128px;top:513.0px;font-size:15px;line-height:19px;color:#86068a;">me</span>
<span class="t m" style="left:1155px;top:513.0px;font-size:15px;line-height:19px;color:#86068a;">into</span>
<span class="t m" style="left:1200px;top:513.0px;font-size:15px;line-height:19px;color:#000;">tNote</span>
<span class="t m" style="left:876px;top:533.0px;font-size:15px;line-height:19px;color:#807800;">put</span>
<span class="t m" style="left:912px;top:533.0px;font-size:15px;line-height:19px;color:#86068a;">item</span>
<span class="t m" style="left:957px;top:533.0px;font-size:15px;line-height:19px;color:#00006a;">2</span>
<span class="t m" style="left:975px;top:533.0px;font-size:15px;line-height:19px;color:#86068a;">of</span>
<span class="t m" style="left:1002px;top:533.0px;font-size:15px;line-height:19px;color:#86068a;">line</span>
<span class="t m" style="left:1047px;top:533.0px;font-size:15px;line-height:19px;color:#000;">tLine</span>
<span class="t m" style="left:1101px;top:533.0px;font-size:15px;line-height:19px;color:#86068a;">of</span>
<span class="t m" style="left:1128px;top:533.0px;font-size:15px;line-height:19px;color:#86068a;">me</span>
<span class="t m" style="left:1155px;top:533.0px;font-size:15px;line-height:19px;color:#86068a;">into</span>
<span class="t m" style="left:1200px;top:533.0px;font-size:15px;line-height:19px;color:#000;">tTime</span>
<span class="t m" style="left:876px;top:573.0px;font-size:15px;line-height:19px;color:#007c0a;font-weight:700;">--Set the Values to the Edit Card</span>
<span class="t m" style="left:876px;top:613.0px;font-size:15px;line-height:19px;color:#807800;">set</span>
<span class="t m" style="left:912px;top:613.0px;font-size:15px;line-height:19px;color:#86068a;">the</span>
<span class="t m" style="left:948px;top:613.0px;font-size:15px;line-height:19px;color:#16868a;">text</span>
<span class="t m" style="left:993px;top:613.0px;font-size:15px;line-height:19px;color:#86068a;">of</span>
<span class="t m" style="left:1020px;top:613.0px;font-size:15px;line-height:19px;color:#86068a;">field</span>
<span class="t m" style="left:1074px;top:613.0px;font-size:15px;line-height:19px;color:#00006a;">"NoteText"</span>
<span class="t m" style="left:1173px;top:613.0px;font-size:15px;line-height:19px;color:#86068a;">of</span>
<span class="t m" style="left:1200px;top:613.0px;font-size:15px;line-height:19px;color:#86068a;">card</span>
<span class="t m" style="left:1245px;top:613.0px;font-size:15px;line-height:19px;color:#00006a;">"cardNoteEdit"</span>
<span class="t m" style="left:1380px;top:613.0px;font-size:15px;line-height:19px;color:#86068a;">to</span>
<span class="t m" style="left:1407px;top:613.0px;font-size:15px;line-height:19px;color:#000;">tNote</span>
<span class="t m" style="left:876px;top:633.0px;font-size:15px;line-height:19px;color:#807800;">set</span>
<span class="t m" style="left:912px;top:633.0px;font-size:15px;line-height:19px;color:#86068a;">the</span>
<span class="t m" style="left:948px;top:633.0px;font-size:15px;line-height:19px;color:#16868a;">text</span>
<span class="t m" style="left:993px;top:633.0px;font-size:15px;line-height:19px;color:#86068a;">of</span>
<span class="t m" style="left:1020px;top:633.0px;font-size:15px;line-height:19px;color:#86068a;">field</span>
<span class="t m" style="left:1074px;top:633.0px;font-size:15px;line-height:19px;color:#00006a;">"EditTime"</span>
<span class="t m" style="left:1173px;top:633.0px;font-size:15px;line-height:19px;color:#86068a;">of</span>
<span class="t m" style="left:1200px;top:633.0px;font-size:15px;line-height:19px;color:#86068a;">card</span>
<span class="t m" style="left:1245px;top:633.0px;font-size:15px;line-height:19px;color:#00006a;">"cardNoteEdit"</span>
<span class="t m" style="left:1380px;top:633.0px;font-size:15px;line-height:19px;color:#86068a;">to</span>
<span class="t m" style="left:1407px;top:633.0px;font-size:15px;line-height:19px;color:#000;">tTime</span>
<span class="t m" style="left:885px;top:673.0px;font-size:15px;line-height:19px;color:#007c0a;font-weight:700;">--Show the card</span>
<span class="t m" style="left:912px;top:713.0px;font-size:15px;line-height:19px;color:#807800;">go</span>
<span class="t m" style="left:939px;top:713.0px;font-size:15px;line-height:19px;color:#86068a;">to</span>
<span class="t m" style="left:966px;top:713.0px;font-size:15px;line-height:19px;color:#86068a;">card</span>
<span class="t m" style="left:1011px;top:713.0px;font-size:15px;line-height:19px;color:#00006a;">"cardNoteEdit"</span>
<span class="t m" style="left:849px;top:753.0px;font-size:15px;line-height:19px;color:#000;font-weight:700;">end</span>
<span class="t m" style="left:885px;top:753.0px;font-size:15px;line-height:19px;color:#1a1a1a;">mouseUp</span>
<div style="left:749px;top:804.8px;width:1171px;height:62px;background:#f0f0f0;"></div>
<div style="left:749px;top:796px;width:31px;height:30px;background:#fff;border:1px solid #c8c8c8"></div>
<div class="w" style="left:750px;top:797px;width:29px;height:28px"><span class="t" style="left:9.5px;top:6px;font-size:16px;line-height:20px;font-style:italic;color:#000">Filter...</span></div>
<svg style="left:846px;top:808px" width="8" height="11" viewBox="0 0 8 11"><path d="M6.5 1.5l-4.5 4 4.5 4" fill="none" stroke="#c6c6c6" stroke-width="1.6"/></svg>
<div style="left:818.5px;top:841.5px;width:91.0px;height:25.5px;background:#f0f0f0;border:1px solid #c2c2c2"></div>
<span class="t" style="left:833.4px;top:845.6px;font-size:15.5px;line-height:19px;color:#000;letter-spacing:-0.48px;">Variables</span>
<div style="left:911px;top:841.5px;width:138.5px;height:25.5px;background:#f0f0f0;border:1px solid #c2c2c2"></div>
<span class="t" style="left:927.3px;top:845.6px;font-size:15.5px;line-height:19px;color:#000;letter-spacing:0.10px;">Documentation</span>
<div style="left:1051px;top:841.5px;width:113.5px;height:25.5px;background:#f0f0f0;border:1px solid #c2c2c2"></div>
<span class="t" style="left:1067.3px;top:845.6px;font-size:15.5px;line-height:19px;color:#000;letter-spacing:-0.19px;">Breakpoints</span>
<div style="left:1166px;top:841.5px;width:137.5px;height:25.5px;background:#f0f0f0;border:1px solid #c2c2c2"></div>
<span class="t" style="left:1185.3px;top:845.6px;font-size:15.5px;line-height:19px;color:#000;letter-spacing:-0.59px;">Search Results</span>
<div style="left:749px;top:839.5px;width:68.5px;height:27.5px;background:#fff;border:1px solid #d4d4d4;border-bottom:none;border-left:none"></div>
<span class="t" style="left:762.5px;top:844.6px;font-size:15.5px;line-height:19px;color:#000;font-weight:700;letter-spacing:-1.10px;">Errors</span>
<div style="left:749px;top:867px;width:1171px;height:134px;background:#fff;"></div>
<svg style="left:758px;top:882px" width="21" height="21" viewBox="0 0 21 21"><circle cx="10.5" cy="10.5" r="9.5" fill="#1b7f2c" stroke="#5a9f66" stroke-width="1"/><path d="M5.5 11l3.5 3.8L15.5 7" fill="none" stroke="#fff" stroke-width="2.6"/></svg>
<span class="t" style="left:790.5px;top:881.6px;font-size:15.5px;line-height:19px;color:#000;letter-spacing:-0.06px;">No errors occurred</span>
<!-- main window -->
<div style="left:150px;top:7px;width:1208px;height:132px;background:#fff;border:1px solid #8c8c8c;box-shadow:0 2px 14px rgba(0,0,0,.3)"></div>
<div style="left:151px;top:76px;width:1206px;height:62px;background:#f0f0f0;"></div>
<svg style="left:160px;top:16px" width="19.6" height="21.6" viewBox="0 0 20 22"><path d="M3.5 0.5h13a3 3 0 0 1 3 3v11a3 3 0 0 1-3 3H11l-4.5 4 .6-4H3.5a3 3 0 0 1-3-3v-11a3 3 0 0 1 3-3z" fill="#2a9fd6"/><path d="M5 4.5v6.3a2.6 2.6 0 0 0 2.6 2.6h1.2M15.6 8.2a3 3 0 1 0 0 4.4" stroke="#fff" stroke-width="2" fill="none" stroke-linecap="round"/></svg>
<span class="t" style="left:185.0px;top:18.0px;font-size:14.5px;line-height:18px;color:#999;letter-spacing:-0.16px;">LiveCode Indy 9.5.1</span>
<svg style="left:1200px;top:16px" width="140" height="22" viewBox="0 0 140 22"><path d="M4.5 9.5h12" stroke="#999" stroke-width="1" fill="none"/><rect x="62.5" y="4.5" width="11" height="11" stroke="#e2e2e2" stroke-width="1" fill="none"/><path d="M121 4l12 12M133 4l-12 12" stroke="#777" stroke-width="1.1" fill="none"/></svg>
<span class="t" style="left:156.2px;top:51.1px;font-size:15.5px;line-height:19px;color:#000;letter-spacing:-0.79px;">File</span>
<span class="t" style="left:189.5px;top:51.1px;font-size:15.5px;line-height:19px;color:#000;letter-spacing:-0.58px;">Edit</span>
<span class="t" style="left:224.2px;top:51.1px;font-size:15.5px;line-height:19px;color:#000;letter-spacing:-0.47px;">Tools</span>
<span class="t" style="left:269.0px;top:51.1px;font-size:15.5px;line-height:19px;color:#000;letter-spacing:-0.07px;">Object</span>
<span class="t" style="left:322.0px;top:51.1px;font-size:15.5px;line-height:19px;color:#000;letter-spacing:-0.16px;">Text</span>
<span class="t" style="left:360.5px;top:51.1px;font-size:15.5px;line-height:19px;color:#000;letter-spacing:-0.04px;">Development</span>
<span class="t" style="left:461.0px;top:51.1px;font-size:15.5px;line-height:19px;color:#000;letter-spacing:0.04px;">View</span>
<span class="t" style="left:504.0px;top:51.1px;font-size:15.5px;line-height:19px;color:#000;letter-spacing:0.16px;">Window</span>
<span class="t" style="left:570.5px;top:51.1px;font-size:15.5px;line-height:19px;color:#000;letter-spacing:-0.12px;">Help</span>
<span class="t" style="left:171.2px;top:113.1px;font-size:15.5px;line-height:19px;color:#000;letter-spacing:-0.06px;">Inspector</span>
<span class="t" style="left:265.2px;top:113.1px;font-size:15.5px;line-height:19px;color:#000;letter-spacing:-0.75px;">Code</span>
<span class="t" style="left:327.5px;top:113.1px;font-size:15.5px;line-height:19px;color:#000;letter-spacing:-0.49px;">Message Box</span>
<span class="t" style="left:452.2px;top:113.1px;font-size:15.5px;line-height:19px;color:#000;letter-spacing:-0.07px;">Group</span>
<span class="t" style="left:524.2px;top:113.1px;font-size:15.5px;line-height:19px;color:#b4b4b4;letter-spacing:-0.25px;">Edit Group</span>
<span class="t" style="left:611.2px;top:113.1px;font-size:15.5px;line-height:19px;color:#000;letter-spacing:-0.34px;">Select Grouped</span>
<span class="t" style="left:740.5px;top:113.1px;font-size:15.5px;line-height:19px;color:#000;letter-spacing:-0.81px;">Messages</span>
<span class="t" style="left:834.5px;top:113.1px;font-size:15.5px;line-height:19px;color:#000;letter-spacing:-0.64px;">Errors</span>
<span class="t" style="left:910.5px;top:113.1px;font-size:15.5px;line-height:19px;color:#000;letter-spacing:-0.62px;">Sample Stacks</span>
<span class="t" style="left:1022.5px;top:113.1px;font-size:15.5px;line-height:19px;color:#000;letter-spacing:-0.12px;">Tutorials</span>
<span class="t" style="left:1097.5px;top:113.1px;font-size:15.5px;line-height:19px;color:#000;letter-spacing:-0.75px;">Resources</span>
<span class="t" style="left:1176.7px;top:113.1px;font-size:15.5px;line-height:19px;color:#000;letter-spacing:0.14px;">Dictionary</span>
<span class="t" style="left:1291.0px;top:113.1px;font-size:15.5px;line-height:19px;color:#b4b4b4;letter-spacing:-0.59px;">Test</span>
<div style="left:427px;top:81px;width:2px;height:51px;background:#d4d4d4;"></div>
<div style="left:726px;top:81px;width:2px;height:51px;background:#d4d4d4;"></div>
<div style="left:899px;top:81px;width:2px;height:51px;background:#d4d4d4;"></div>
<div style="left:1257px;top:81px;width:2px;height:51px;background:#d4d4d4;"></div>
<div style="left:854px;top:139px;width:492px;height:14px;background:linear-gradient(#cfcfcf,#dcdcdc 3px,#dddddd 6px,#e3e3e3 6px,#e3e3e3 7px,#dcdcdc 7px,#dadada);border-left:1px solid #8e8e8e;border-right:1px solid #8e8e8e"></div>
<svg style="left:188px;top:83px" width="32" height="26" viewBox="0 0 32 26"><rect x="1.2" y="1" width="29.6" height="24.2" rx=".8" fill="#f0f0f0" stroke="#111" stroke-width="1.4"/><rect x="1" y=".6" width="30" height="4.6" fill="#111"/><circle cx="25" cy="2.9" r="1.25" fill="#fff"/><circle cx="28.4" cy="2.9" r="1.25" fill="#fff"/><circle cx="18.4" cy="13" r="4.7" fill="none" stroke="#111" stroke-width="2"/><path d="M15 16.6l-4.8 4.6" stroke="#111" stroke-width="3.2" stroke-linecap="round"/></svg>
<svg style="left:268px;top:83px" width="32" height="26" viewBox="0 0 32 26"><rect x="1.2" y="1" width="29.6" height="24.2" rx=".8" fill="#f0f0f0" stroke="#111" stroke-width="1.4"/><rect x="1" y=".6" width="30" height="4.6" fill="#111"/><circle cx="25" cy="2.9" r="1.25" fill="#fff"/><circle cx="28.4" cy="2.9" r="1.25" fill="#fff"/><path d="M12.5 8.8c3 .900 7.5.9 11.5-.200-1.6 3.6-1.6 5.4-.200 7.6 1 1.6.8 3.4-.400 5-3.5-.900-7.6-.900-11.4 0 1-1 1.4-2 1.2-3" fill="none" stroke="#111" stroke-width="1.3"/><path d="M6.4 14.8c1.2-2.2 6.8-4 11.6-2.4l-1.8 2.8 2.4 1.6c-3.6 2.6-9.8 2.8-12 .800-.800-.800-.800-1.8-.200-2.8z" fill="#f0f0f0" stroke="#111" stroke-width="1.2"/><path d="M8 14.6l7.5-1.2M8 16.2l8.5-.600M9 17.8l6.5-.500" stroke="#111" stroke-width=".9"/></svg>
<svg style="left:356px;top:83px" width="32" height="26" viewBox="0 0 32 26"><rect x="0" y="0" width="32" height="26" rx="1.2" fill="#111"/><rect x="1.2" y="5.2" width="29.6" height="1.5" fill="#fff"/><circle cx="25" cy="2.6" r="1.2" fill="#fff"/><circle cx="28.4" cy="2.6" r="1.2" fill="#fff"/><path d="M4.6 11.2l3.8 3-3.8 3" fill="none" stroke="#fff" stroke-width="1.5"/><path d="M9.5 17.8h5" stroke="#fff" stroke-width="1.5"/></svg>
<svg style="left:458px;top:82px" width="34" height="32" viewBox="0 0 34 32"><path d="M19 5h4.5M27.5 5h2.6v2.6M30.1 11v9M30.1 24.5v3.9h-2.6M22.5 28.4h-6.5M11.5 28.4H7.3v-3.9M7.3 20.5v-4" fill="none" stroke="#111" stroke-width="2.5"/><circle cx="10" cy="9.2" r="8.1" fill="#111"/><path d="M10 5v8.4M5.8 9.2h8.4" stroke="#fff" stroke-width="2"/></svg>
<svg style="left:545px;top:80px" width="34" height="34" viewBox="0 0 34 34"><path d="M19.5 6.5h4M28 6.5h2v2.6M30 12.5v9M30 26v3.8h-2.6M23 29.8h-6.5M12 29.8H5.2v-3.9M5.2 21.5v-6" fill="none" stroke="#c6c6c6" stroke-width="2.4"/><path d="M1.5 5.5c0-2 3-4.5 5.5-3.5l8.5 9.5.8 8-7.3-2.5-8-9.5c-.300-.800-.200-1.4.5-2z" fill="#c2c2c2"/><path d="M4.5 8l8.5 9.5M6.8 6l8.5 9.5M2.8 9.5l6.5-5.5" stroke="#f0f0f0" stroke-width=".9" fill="none"/></svg>
<svg style="left:646px;top:81px" width="38" height="34" viewBox="0 0 38 34"><path d="M2.5 6.5v-4h4M11 2.5h7M22.5 2.5h4v4M26.5 11v5.5M26.5 21v1M2.5 11v7M2.5 22.5v4h1M13.5 26.5h6" fill="none" stroke="#111" stroke-width="2.5"/><rect x="9.2" y="7.5" width="12.4" height="11" fill="#111"/><path d="M20.3 9.8l-2.6 12.6-3.2-3.4-8.6 8.4-4-4 8.6-8.4-3.4-3.2z" fill="#111" stroke="#f0f0f0" stroke-width="1.3" stroke-linejoin="round"/><circle cx="28.2" cy="26.6" r="6" fill="#f0f0f0" stroke="#111" stroke-width="2.3"/><path d="M24.2 30.6l8-8" stroke="#111" stroke-width="2.3"/></svg>
<svg style="left:754px;top:87px" width="32" height="20" viewBox="0 0 32 20"><rect x="0" y="0" width="32" height="20" rx="2.5" fill="#111"/><path d="M4.5 4l11.5 9 11.5-9M4.5 16.5l8-6.5M27.5 16.5l-8-6.5" fill="none" stroke="#fff" stroke-width="1.3"/></svg>
<svg style="left:837px;top:84px" width="28" height="26" viewBox="0 0 28 26"><path d="M14 1.5L26.8 24.5H1.2z" fill="#111" stroke="#111" stroke-width="2" stroke-linejoin="round"/><rect x="12.8" y="9.5" width="2.6" height="8" fill="#fff"/><rect x="12.8" y="19" width="2.6" height="2.6" fill="#fff"/></svg>
<svg style="left:938px;top:84px" width="40" height="26" viewBox="0 0 40 26"><path d="M8.2 4.5c3 0 4.6 2.4 4.4 5.6-.200 2.6.600 4.6 2 5.6-1.6.900-3.4 1-4.6.600v1.7c2 .500 3.6 1.2 4.6 2.2l-2.6 2.3H.500c0-2.6 2.6-4 5.7-4.6v-1.6c-1.2.400-3 .300-4.6-.600 1.4-1 2.2-3 2-5.6-.200-3.2 1.6-5.6 4.6-5.6z" fill="#111"/><path d="M31.8 4.5c-3 0-4.6 2.4-4.4 5.6.200 2.6-.600 4.6-2 5.6 1.6.900 3.4 1 4.6.600v1.7c-2 .500-3.6 1.2-4.6 2.2l2.6 2.3h11.5c0-2.6-2.6-4-5.7-4.6v-1.6c1.2.400 3 .300 4.6-.600-1.4-1-2.2-3-2-5.6.200-3.2-1.6-5.6-4.6-5.6z" fill="#111"/><path d="M20 .400c3.7 0 5.8 3 5.5 7-.200 3-1.2 5-2.7 6.4v2.6c5.2 1 9.7 3.4 9.7 9.4h-25c0-6 4.5-8.4 9.7-9.4v-2.6c-1.5-1.4-2.5-3.4-2.7-6.4-.300-4 1.8-7 5.5-7z" fill="#111" stroke="#f0f0f0" stroke-width=".9"/></svg>
<svg style="left:1036px;top:84px" width="34" height="27" viewBox="0 0 34 27"><path d="M17 0.5L33.5 8.5 17 16.5 0.5 8.5z" fill="#111"/><path d="M6 13.5l11 5.5 11-5.5v7L17 26.5 6 20.5z" fill="#111"/><path d="M31.5 9.5v10" stroke="#111" stroke-width="2.2"/></svg>
<svg style="left:1118px;top:84px" width="28" height="27" viewBox="0 0 28 27"><rect x="0.5" y="0.5" width="7" height="26" rx="1.2" fill="#111"/><rect x="9" y="0.5" width="7" height="26" rx="1.2" fill="#111"/><path d="M1 5h6M1 7.5h6M1 10h6M9.5 5h6M9.5 7.5h6M9.5 10h6" stroke="#f0f0f0" stroke-width=".9"/><rect x="19" y="4" width="6.5" height="22.5" rx="1.2" fill="#111" transform="rotate(-12 22 15)"/><path d="M18.3 8.5l6-1.3M18.8 11l6-1.3M19.3 13.5l6-1.3" stroke="#f0f0f0" stroke-width=".9"/></svg>
<svg style="left:1197px;top:84px" width="32" height="26" viewBox="0 0 32 26"><rect x="1.2" y="1" width="29.6" height="24.2" rx=".8" fill="#f0f0f0" stroke="#111" stroke-width="1.4"/><rect x="1" y=".6" width="30" height="4.6" fill="#111"/><circle cx="25" cy="2.9" r="1.25" fill="#fff"/><circle cx="28.4" cy="2.9" r="1.25" fill="#fff"/><path d="M8 11.5c3-1 6-1 8 .8 2-1.8 5-1.8 8-.8v8.5c-3-1-6-1-8 .6-2-1.6-5-1.6-8-.6z" fill="none" stroke="#111" stroke-width="1.4"/><path d="M16 12.5v8.5" stroke="#111" stroke-width="1.2"/></svg>
<svg style="left:1286px;top:84px" width="38" height="27" viewBox="0 0 38 27"><rect x="1.5" y="1.5" width="35" height="24" rx="2" fill="#f0f0f0" stroke="#c0c0c0" stroke-width="2.2"/><rect x="1.5" y="1.5" width="4.5" height="24" fill="#c0c0c0"/><rect x="32" y="1.5" width="4.5" height="24" fill="#c0c0c0"/><path d="M14.5 7l10 6.5-10 6.5z" fill="#c0c0c0"/><circle cx="3.5" cy="13.5" r="1.2" fill="#f0f0f0"/></svg>
<!-- tools palette -->
<div style="left:1616px;top:258px;width:172px;height:780px;background:#f0f0f0;border-top:1px solid #4a4a4a;box-shadow:0 3px 15px rgba(0,0,0,.42)"></div>
<div style="left:1616px;top:259px;width:172px;height:37px;background:#fff;"></div>
<span class="t" style="left:1625.0px;top:268.1px;font-size:15.5px;line-height:19px;color:#000;letter-spacing:-0.30px;">Tools</span>
<div style="left:1762px;top:267px;width:25px;height:25px;background:#c8494e;"></div>
<svg style="left:1769px;top:274px" width="11" height="11" viewBox="0 0 11 11"><path d="M2 2l7 7M9 2l-7 7" stroke="#fff" stroke-width="1.7"/></svg>
<div style="left:1616px;top:321px;width:172px;height:1px;background:#b4b4b4;"></div>
<svg style="left:1735px;top:302px" width="15" height="15" viewBox="0 0 15 15"><path d="M7.5 1v13M1 7.5h13" stroke="#000" stroke-width="3"/></svg>
<svg style="left:0;top:0" width="1" height="1"><path d="M1775.27,307.69L1775.40,309.00L1773.56,309.97L1773.28,310.90L1774.27,312.72L1773.44,313.74L1771.45,313.12L1770.60,313.58L1770.01,315.57L1768.70,315.70L1767.73,313.86L1766.80,313.58L1764.98,314.57L1763.96,313.74L1764.58,311.75L1764.12,310.90L1762.13,310.31L1762.00,309.00L1763.84,308.03L1764.12,307.10L1763.13,305.28L1763.96,304.26L1765.95,304.88L1766.80,304.42L1767.39,302.43L1768.70,302.30L1769.67,304.14L1770.60,304.42L1772.42,303.43L1773.44,304.26L1772.82,306.25L1773.28,307.10ZM1771.11,309.00A2.41,2.41 0 1 0 1766.29,309.00A2.41,2.41 0 1 0 1771.11,309.00Z" fill="#000" fill-rule="evenodd" stroke="#000" stroke-width=".6" stroke-linejoin="round"/></svg>
<svg style="left:1643px;top:334px" width="14" height="20" viewBox="0 0 14 20"><path d="M1 1v14l3.5-3.2 2.6 6 2.4-1-2.7-5.8h4.7z" fill="#000" stroke="#000" stroke-width=".6" stroke-linejoin="round"/></svg>
<div style="left:1689px;top:330px;width:24.5px;height:24.5px;background:#b0b0b0;"></div>
<svg style="left:1690px;top:332px" width="23" height="21" viewBox="0 0 23 21"><path d="M1.5 1v11.5L10 7z" fill="#111"/><path d="M15 8v10M10 13h10M15 8l-1.6 1.8M15 8l1.6 1.8M15 18l-1.6-1.8M15 18l1.6-1.8M10 13l1.8-1.6M10 13l1.8 1.6M20 13l-1.8-1.6M20 13l-1.8 1.6" stroke="#111" stroke-width="1.1" fill="none"/></svg>
<div style="left:1624px;top:362.0px;width:154.5px;height:1.2px;background:#cbcbcb;"></div>
<div style="left:1624px;top:575.0px;width:154.5px;height:1.2px;background:#cbcbcb;"></div>
<div style="left:1624px;top:816.0px;width:154.5px;height:1.2px;background:#cbcbcb;"></div>
<div style="left:1624px;top:856.0px;width:154.5px;height:1.2px;background:#cbcbcb;"></div>
<div style="left:1624px;top:928.5px;width:154.5px;height:1.2px;background:#cbcbcb;"></div>
<svg style="left:1632px;top:370px" width="34" height="24" viewBox="0 0 34 24"><rect x="0" y="0" width="1.2" height="24" fill="#777"/><rect x="2.5" y="0" width="0.8" height="24" fill="#777"/><rect x="4.3" y="0" width="1.6" height="24" fill="#777"/><rect x="7" y="0" width="1" height="24" fill="#777"/><rect x="9" y="0" width="1.5" height="24" fill="#777"/><rect x="11.5" y="0" width="0.8" height="24" fill="#777"/><rect x="13.2" y="0" width="1.8" height="24" fill="#777"/><rect x="16" y="0" width="1.2" height="24" fill="#777"/><rect x="18.5" y="0" width="1" height="24" fill="#777"/><rect x="20.5" y="0" width="1.6" height="24" fill="#777"/><rect x="23" y="0" width="0.9" height="24" fill="#777"/><rect x="25" y="0" width="1.6" height="24" fill="#777"/><rect x="27.5" y="0" width="1" height="24" fill="#777"/><rect x="29.5" y="0" width="0.9" height="24" fill="#777"/><rect x="31.5" y="0" width="1.3" height="24" fill="#777"/></svg>
<svg style="left:1678.5px;top:370px" width="45" height="24.5" viewBox="0 0 45 24.5"><rect width="45" height="24.5" rx="3" fill="#636363"/><g transform="translate(22.5 12.2) scale(1.1)" fill="#fff"><path d="M-4.6 -3.2a4.6 4.4 0 0 1 9.2 0z"/><rect x="-4.6" y="-2.4" width="9.2" height="7.6" rx="1"/><rect x="-7" y="-2.2" width="1.8" height="5.6" rx=".9"/><rect x="5.2" y="-2.2" width="1.8" height="5.6" rx=".9"/><rect x="-2.8" y="4" width="1.9" height="4.2" rx=".9"/><rect x=".9" y="4" width="1.9" height="4.2" rx=".9"/><path d="M-3 -7.6l1 1.8M3 -7.6l-1 1.8" stroke="#fff" stroke-width=".7"/></g></svg>
<svg style="left:1730px;top:370px" width="47.5" height="24.5" viewBox="0 0 47.5 24.5"><rect width="47.5" height="24.5" rx="2.5" fill="#636363"/><path d="M6.4 4.5h5.2M9 4.5v15M6.4 19.5h5.2" stroke="#fff" stroke-width="1.5" fill="none"/><g transform="translate(34 12.2) scale(1.1)" fill="#fff"><path d="M-4.6 -3.2a4.6 4.4 0 0 1 9.2 0z"/><rect x="-4.6" y="-2.4" width="9.2" height="7.6" rx="1"/><rect x="-7" y="-2.2" width="1.8" height="5.6" rx=".9"/><rect x="5.2" y="-2.2" width="1.8" height="5.6" rx=".9"/><rect x="-2.8" y="4" width="1.9" height="4.2" rx=".9"/><rect x=".9" y="4" width="1.9" height="4.2" rx=".9"/><path d="M-3 -7.6l1 1.8M3 -7.6l-1 1.8" stroke="#fff" stroke-width=".7"/></g></svg>
<svg style="left:1635.5px;top:398px" width="26" height="26" viewBox="0 0 26 26"><circle cx="13" cy="13" r="11.7" fill="#fff" stroke="#636363" stroke-width="1.8"/><path d="M4 8c2-3 5-5 9-5.5l2.5 2-2 2.5-3 .5-1 3 2.5 1.5 3.5 1 .5 3.5-2.5 3-1 3.5-2.5-1.5-.5-5-3-2.5-1.5-3z" fill="#636363"/><path d="M17.5 3.5c3 1 5.5 3.5 6.5 6.5l-2 1-1.5 3 1.5 2.5 1.5 1.5c-1 2.5-3 4.5-5.5 5.5l1-4-2-3 .5-4 2.5-2.5-1-3.5z" fill="#636363"/></svg>
<svg style="left:1688px;top:398px" width="26" height="26" viewBox="0 0 26 26"><circle cx="13" cy="13" r="12.2" fill="#636363"/><path d="M13.00 3.20L13.00 5.00" stroke="#d0d0d0" stroke-width="1"/><path d="M17.90 4.51L17.00 6.07" stroke="#d0d0d0" stroke-width="1"/><path d="M21.49 8.10L19.93 9.00" stroke="#d0d0d0" stroke-width="1"/><path d="M22.80 13.00L21.00 13.00" stroke="#d0d0d0" stroke-width="1"/><path d="M21.49 17.90L19.93 17.00" stroke="#d0d0d0" stroke-width="1"/><path d="M17.90 21.49L17.00 19.93" stroke="#d0d0d0" stroke-width="1"/><path d="M13.00 22.80L13.00 21.00" stroke="#d0d0d0" stroke-width="1"/><path d="M8.10 21.49L9.00 19.93" stroke="#d0d0d0" stroke-width="1"/><path d="M4.51 17.90L6.07 17.00" stroke="#d0d0d0" stroke-width="1"/><path d="M3.20 13.00L5.00 13.00" stroke="#d0d0d0" stroke-width="1"/><path d="M4.51 8.10L6.07 9.00" stroke="#d0d0d0" stroke-width="1"/><path d="M8.10 4.51L9.00 6.07" stroke="#d0d0d0" stroke-width="1"/><path d="M13 3.5V13l5 5" stroke="#e8e8e8" stroke-width="1.6" fill="none"/></svg>
<svg style="left:1729px;top:402px" width="49" height="18.5" viewBox="0 0 49 18.5"><rect width="49" height="18.5" fill="#636363"/><path d="M6.2 5l-3.2 4.2 3.2 4.2" stroke="#fff" stroke-width="1.7" fill="none"/><path d="M43 5.8v7M39.5 9.3h7" stroke="#fff" stroke-width="1.8"/><text x="23.5" y="13.2" text-anchor="middle" font-family="Liberation Sans, sans-serif" font-weight="700" font-size="11" fill="#fff">Title</text></svg>
<svg style="left:1626px;top:428px" width="45" height="23.5" viewBox="0 0 45 23.5"><rect width="45" height="23.5" rx="2.5" fill="#636363"/><path d="M16 3h13l-1.2 14.5-5.3 2.5-5.3-2.5z" fill="#fff"/><path d="M19 6.2h7.2M19 6.2l.4 4h6.3l-.5 5-2.7 1-2.7-1-.15-1.7" fill="none" stroke="#636363" stroke-width="1.5"/></svg>
<svg style="left:1676px;top:428px" width="50" height="23.5" viewBox="0 0 50 23.5"><rect width="50" height="23.5" rx="1.5" fill="#636363"/><text x="25" y="20.5" text-anchor="middle" font-family="Liberation Sans, sans-serif" font-size="23" fill="#8c8c8c" letter-spacing="-.5">iOS</text></svg>
<svg style="left:1732.5px;top:428px" width="42" height="24" viewBox="0 0 42 24"><path d="M8 2v19" stroke="#9a9a9a" stroke-width=".9"/><path d="M14.5 2v19" stroke="#9a9a9a" stroke-width=".9"/><path d="M21 2v19" stroke="#9a9a9a" stroke-width=".9"/><path d="M27.5 2v19" stroke="#9a9a9a" stroke-width=".9"/><path d="M34 2v19" stroke="#9a9a9a" stroke-width=".9"/><path d="M39.5 2v19" stroke="#9a9a9a" stroke-width=".9"/><path d="M3 3h37" stroke="#b4b4b4" stroke-width=".9"/><path d="M3 7h37" stroke="#b4b4b4" stroke-width=".9"/><path d="M3 11h37" stroke="#b4b4b4" stroke-width=".9"/><path d="M3 15h37" stroke="#b4b4b4" stroke-width=".9"/><path d="M3 19h37" stroke="#b4b4b4" stroke-width=".9"/><path d="M2.2 0v22.4h39" stroke="#636363" stroke-width="3" fill="none"/><path d="M4 18.5l9.5-9 7.5 7.5 8-12 9.5 15" fill="none" stroke="#636363" stroke-width="2.4" stroke-linejoin="miter"/></svg>
<svg style="left:1628px;top:456px" width="41" height="24.7" viewBox="0 0 41 24.7"><rect width="41" height="24.7" rx="3" fill="#636363"/><g transform="translate(20.5 11.8)"><rect x="-9.5" y="-8" width="19" height="12.5" rx="1" fill="none" stroke="#fff" stroke-width="1.6"/><path d="M-3 4.5h6l1 3h-8z" fill="#fff"/><rect x="-6" y="7.2" width="12" height="1.3" fill="#fff"/><path d="M0 -3.6c1-1.2 2.8-.8 3.2.4-1.4.8-1.2 2.8.2 3.4-.6 1.6-1.7 2.6-3.4 1.8-1.7.8-3-.6-3.3-2.4-.3-2 1.2-3.8 3.3-3.2z" fill="#fff"/><path d="M.2 -4c0-1 .8-1.8 1.6-1.8 0 1-.8 1.8-1.6 1.8z" fill="#fff"/></g></svg>
<svg style="left:1681px;top:456px" width="40.5" height="24.7" viewBox="0 0 40.5 24.7"><rect width="40.5" height="24.7" rx="3" fill="#636363"/><path d="M3.9 4.5h5.2M6.5 4.5v15.5M3.9 20.0h5.2" stroke="#fff" stroke-width="1.5" fill="none"/><g transform="translate(26.5 11.8)"><rect x="-9.5" y="-8" width="19" height="12.5" rx="1" fill="none" stroke="#fff" stroke-width="1.6"/><path d="M-3 4.5h6l1 3h-8z" fill="#fff"/><rect x="-6" y="7.2" width="12" height="1.3" fill="#fff"/><path d="M0 -3.6c1-1.2 2.8-.8 3.2.4-1.4.8-1.2 2.8.2 3.4-.6 1.6-1.7 2.6-3.4 1.8-1.7.8-3-.6-3.3-2.4-.3-2 1.2-3.8 3.3-3.2z" fill="#fff"/><path d="M.2 -4c0-1 .8-1.8 1.6-1.8 0 1-.8 1.8-1.6 1.8z" fill="#fff"/></g></svg>
<svg style="left:1745.5px;top:456px" width="16" height="25" viewBox="0 0 16 25"><path d="M8 24.6C4.5 18.5 .4 13 .4 8a7.6 7.6 0 0 1 15.2 0c0 5-4.1 10.5-7.6 16.6z" fill="#636363"/><circle cx="8" cy="7.8" r="4.3" fill="#f0f0f0"/></svg>
<svg style="left:1624px;top:488px" width="49" height="18.5" viewBox="0 0 49 18.5"><rect width="49" height="18.5" fill="#636363"/><path d="M7.2 12.5a3.2 3.2 0 1 1 5.6 0" stroke="#fff" stroke-width="2" fill="none"/><path d="M24.5 4.8l1.4 3 3.2.4-2.4 2.2.6 3.2-2.8-1.6-2.8 1.6.6-3.2-2.4-2.2 3.2-.4z" fill="none" stroke="#e0e0e0" stroke-width=".9"/><circle cx="38.5" cy="8.2" r="3.4" fill="none" stroke="#d8d8d8" stroke-width="1"/><path d="M41 10.8l3 3" stroke="#d8d8d8" stroke-width="1"/></svg>
<svg style="left:1676px;top:488px" width="50" height="18.5" viewBox="0 0 50 18.5"><rect width="50" height="18.5" rx="5" fill="#636363"/><path d="M17 2v14.5M33.5 2v14.5" stroke="#bdbdbd" stroke-width="1"/><path d="M6 6h7M6 9.2h5M6 12.5h7M21.5 6h8M23 9.2h5M21.5 12.5h8M38 6h7M40 9.2h5M38 12.5h7" stroke="#fff" stroke-width="1.4"/></svg>
<svg style="left:1737.5px;top:484.5px" width="33" height="25" viewBox="0 0 33 25"><path d="M20 2.5H5.5a4 4 0 0 0-4 4v13a4 4 0 0 0 4 4h15a4 4 0 0 0 4-4v-5" fill="none" stroke="#636363" stroke-width="1.9"/><path d="M11.2 19.8l1.4-6.2L24.8 1.4l4.8 4.8L17.4 18.4z" fill="#636363"/><path d="M26 .2l1.8-1.2 5 5-1.2 1.8z" fill="#636363"/><path d="M13.6 15.2l2.8 2.8M15 13.6L25.5 3.1" stroke="#f0f0f0" stroke-width=".9" fill="none"/></svg>
<svg style="left:1635.5px;top:513px" width="26" height="26" viewBox="0 0 26 26"><circle cx="13.30" cy="3.60" r="3.00" fill="#636363"/><circle cx="6.30" cy="6.50" r="2.74" fill="#636363"/><circle cx="3.40" cy="13.50" r="2.48" fill="#636363"/><circle cx="6.30" cy="20.50" r="2.22" fill="#636363"/><circle cx="13.30" cy="23.40" r="1.96" fill="#636363"/><circle cx="20.30" cy="20.50" r="1.70" fill="#636363"/><circle cx="23.20" cy="13.50" r="1.44" fill="#636363"/><circle cx="20.30" cy="6.50" r="1.18" fill="#636363"/></svg>
<svg style="left:1678px;top:514px" width="46" height="24" viewBox="0 0 46 24"><rect width="46" height="24" rx="1.5" fill="#636363"/><text x="23" y="18" text-anchor="middle" font-family="Liberation Serif, serif" font-weight="700" font-size="17.5" fill="#fff" stroke="#fff" stroke-width=".5" letter-spacing=".2">SVG</text></svg>
<svg style="left:1731px;top:514px" width="45" height="24" viewBox="0 0 45 24"><rect width="45" height="24" rx="12" fill="#636363"/><circle cx="13.2" cy="12" r="10.2" fill="#f0f0f0"/></svg>
<svg style="left:1640px;top:542px" width="18" height="27" viewBox="0 0 18 27"><circle cx="6" cy="5" r="3.6" fill="none" stroke="#636363" stroke-width="1.8"/><path d="M6 3v4M4 5h4" stroke="#636363" stroke-width="1"/><path d="M6 8.5v14.5h6M6 14.5h6" fill="none" stroke="#636363" stroke-width="2"/><circle cx="12.5" cy="14.5" r="3" fill="#636363"/><circle cx="12.5" cy="23" r="3" fill="#636363"/></svg>
<svg style="left:0px;top:0px" width="1" height="1" viewBox="0 0 1 1"><defs><linearGradient id="bg1" x1="0" y1="0" x2="0" y2="1"><stop offset="0" stop-color="#f7f7f7"/><stop offset=".5" stop-color="#e4e4e4"/><stop offset="1" stop-color="#d2d2d2"/></linearGradient><linearGradient id="gr1" x1="0" y1="0" x2="0" y2="1"><stop offset="0" stop-color="#7be07b"/><stop offset=".4" stop-color="#0fce1f"/><stop offset="1" stop-color="#0bb81a"/></linearGradient></defs></svg>
<svg style="left:1628px;top:584px" width="44" height="22" viewBox="0 0 44 22"><rect x="1" y="1.5" width="41" height="19" rx="2" fill="url(#bg1)" stroke="#9a9a9a" stroke-width="1"/></svg>
<svg style="left:1693px;top:586px" width="18" height="18" viewBox="0 0 18 18"><rect x="1" y="1" width="16" height="16" fill="#e8eaf2" stroke="#8e8e8e" stroke-width="1.4"/><path d="M4.5 8.5l3.2 4.5L13.5 3.5" fill="none" stroke="#1f3a93" stroke-width="2.4"/></svg>
<svg style="left:1733px;top:584px" width="44" height="22" viewBox="0 0 44 22"><rect x="1.5" y="1.5" width="40.5" height="19" rx="2" fill="url(#bg1)" stroke="#36b2e6" stroke-width="1.8"/></svg>
<svg style="left:1640px;top:615px" width="17" height="17" viewBox="0 0 17 17"><circle cx="8.5" cy="8.5" r="7.3" fill="#fff" stroke="#8a8a8a" stroke-width="1.2"/><circle cx="8.5" cy="8.5" r="4.6" fill="#1aa0d8" stroke="#24506e" stroke-width="1.4"/><circle cx="8" cy="7.5" r="1.5" fill="#9adcf6"/></svg>
<svg style="left:1680px;top:613px" width="43" height="22" viewBox="0 0 43 22"><rect x="1" y="1.5" width="40" height="19" fill="#ededed" stroke="#c8c8c8" stroke-width=".8"/><path d="M1 20.5h40.5V2" fill="none" stroke="#111" stroke-width="1.6"/></svg>
<svg style="left:1741px;top:611px" width="25" height="25" viewBox="0 0 25 25"><rect x="1" y="1" width="22.5" height="23.5" fill="#fff" stroke="#cfcfcf" stroke-width="1"/><rect x="11" y="1" width="9" height="3" fill="#e2e2e2" stroke="#cfcfcf" stroke-width=".5"/></svg>
<svg style="left:1628px;top:643px" width="43" height="20" viewBox="0 0 43 20"><rect x="1" y="1" width="40" height="17.5" fill="none" stroke="#777" stroke-width="1" stroke-dasharray="1.5 1.5"/><text x="4.5" y="14.5" font-family="Liberation Sans, sans-serif" font-weight="700" font-size="12.5" fill="#666">Label:</text></svg>
<svg style="left:1680px;top:643px" width="43" height="20" viewBox="0 0 43 20"><rect x="1.5" y="1.5" width="39.5" height="17" fill="#fff" stroke="#b0b0b0" stroke-width="1"/><path d="M3.9 4.5h5.2M6.5 4.5v11.5M3.9 16.0h5.2" stroke="#555" stroke-width="1.5" fill="none"/></svg>
<svg style="left:1735px;top:640px" width="38" height="25" viewBox="0 0 38 25"><rect x="1" y="1" width="35.5" height="23" fill="#fff" stroke="#c4c4c4" stroke-width="1"/><rect x="29" y="1.5" width="7" height="22" fill="#e6e6e6" stroke="#c4c4c4" stroke-width=".6"/><rect x="29.8" y="2.5" width="5.4" height="5.4" fill="#d4d4d4" stroke="#b4b4b4" stroke-width=".5"/><rect x="29.8" y="17.1" width="5.4" height="5.4" fill="#d4d4d4" stroke="#b4b4b4" stroke-width=".5"/></svg>
<svg style="left:1630px;top:669px" width="38" height="24" viewBox="0 0 38 24"><rect x="1" y="1" width="35" height="22.5" fill="#fff" stroke="#bcbcbc" stroke-width="1"/><path d="M1 6h27" stroke="#aaa" stroke-width=".8"/><path d="M1 11.5h27" stroke="#aaa" stroke-width=".8"/><path d="M1 17h27" stroke="#aaa" stroke-width=".8"/><path d="M10 1v22" stroke="#aaa" stroke-width=".8"/><path d="M19 1v22" stroke="#aaa" stroke-width=".8"/><rect x="10" y="6" width="9" height="5.5" fill="#fff" stroke="#888" stroke-width="1"/><rect x="29" y="1.5" width="7" height="21.5" fill="#e6e6e6" stroke="#c4c4c4" stroke-width=".6"/><rect x="29.8" y="2.5" width="5.4" height="5.4" fill="#d4d4d4" stroke="#b4b4b4" stroke-width=".5"/><rect x="29.8" y="16.6" width="5.4" height="5.4" fill="#d4d4d4" stroke="#b4b4b4" stroke-width=".5"/></svg>
<svg style="left:1686px;top:669px" width="31" height="24" viewBox="0 0 31 24"><rect x="1" y="1" width="28.5" height="22.5" fill="#fff" stroke="#bcbcbc" stroke-width="1"/><rect x="3.5" y="6.5" width="17" height="4.6" fill="#2e8df2"/><rect x="22" y="1.5" width="7" height="21.5" fill="#e6e6e6" stroke="#c4c4c4" stroke-width=".6"/><rect x="22.8" y="2.5" width="5.4" height="5.4" fill="#d4d4d4" stroke="#b4b4b4" stroke-width=".5"/><rect x="22.8" y="16.6" width="5.4" height="5.4" fill="#d4d4d4" stroke="#b4b4b4" stroke-width=".5"/></svg>
<svg style="left:1735px;top:669px" width="38" height="24" viewBox="0 0 38 24"><rect x="1" y="1" width="35.5" height="22.5" fill="#fff" stroke="#bcbcbc" stroke-width="1"/><rect x="3" y="3" width="24" height="3.2" fill="#bcc8ec"/><rect x="3" y="11.5" width="24" height="5.2" fill="#6c7ea6"/><rect x="4" y="7.5" width="3" height="2" fill="#c0c0c0"/><rect x="4" y="13" width="3" height="2" fill="#fff"/><rect x="4" y="19" width="3" height="2" fill="#c0c0c0"/><rect x="29" y="1.5" width="7" height="21.5" fill="#e6e6e6" stroke="#c4c4c4" stroke-width=".6"/><rect x="29.8" y="2.5" width="5.4" height="5.4" fill="#d4d4d4" stroke="#b4b4b4" stroke-width=".5"/><rect x="29.8" y="16.6" width="5.4" height="5.4" fill="#d4d4d4" stroke="#b4b4b4" stroke-width=".5"/></svg>
<svg style="left:1628px;top:699px" width="43" height="22" viewBox="0 0 43 22"><rect x="1" y="1.5" width="39.5" height="19" rx="2" fill="url(#bg1)" stroke="#8a8a8a" stroke-width="1.2"/><path d="M27.5 9.5h7l-3.5 3.6z" fill="#111"/></svg>
<svg style="left:1684px;top:696px" width="35" height="24" viewBox="0 0 35 24"><rect x="1.5" y="1" width="18" height="7" fill="#2e8df2"/><rect x="1" y="8" width="32" height="14" rx="1.5" fill="#ececec" stroke="#c4c4c4" stroke-width="1"/><rect x="2.5" y="15.5" width="29" height="5" fill="#dff0fa" stroke="#8cc8ea" stroke-width=".8"/><path d="M12.5 17.5v6l1.5-1.4 1 2.2 1-.5-1-2.1h2z" fill="#111" stroke="#fff" stroke-width=".4"/></svg>
<svg style="left:1733px;top:699px" width="43" height="22" viewBox="0 0 43 22"><rect x="1" y="1.5" width="40" height="19" fill="#fff" stroke="#9a9a9a" stroke-width="1"/><rect x="3" y="3" width="12.5" height="15.5" fill="#2e8df2"/><text x="9.2" y="16.5" text-anchor="middle" font-family="Liberation Sans, sans-serif" font-size="16" fill="#fff">a</text><path d="M16.9 5h5.2M19.5 5v11.5M16.9 16.5h5.2" stroke="#666" stroke-width="1.5" fill="none"/><rect x="22.5" y="1.5" width="18.5" height="19" rx="2" fill="url(#bg1)" stroke="#7a7a7a" stroke-width="1.4"/><path d="M28.5 9h7l-3.5 3.6z" fill="#111"/></svg>
<svg style="left:1633px;top:726px" width="34" height="24" viewBox="0 0 34 24"><rect x="1" y="6" width="4" height="10.5" fill="#2e8df2"/><rect x="27.5" y="6" width="4" height="10.5" fill="#2e8df2"/><rect x="5.5" y="1.5" width="21.5" height="17.5" rx="1.5" fill="#f2f2f2" stroke="#c8c8c8" stroke-width="1"/><rect x="7" y="8" width="18.5" height="5" fill="#e4f2fa" stroke="#a8d4ec" stroke-width=".8"/><path d="M19.5 9.5v6l1.5-1.4 1 2.2 1-.5-1-2.1h2z" fill="#111" stroke="#fff" stroke-width=".4"/></svg>
<svg style="left:1680px;top:729px" width="43" height="19" viewBox="0 0 43 19"><rect x="1" y="1" width="40" height="16.5" rx="1.5" fill="url(#bg1)" stroke="#a4a4a4" stroke-width="1"/><rect x="1.5" y="1.5" width="22.5" height="15.5" rx="1" fill="url(#gr1)"/></svg>
<svg style="left:1734px;top:728px" width="40" height="20" viewBox="0 0 40 20"><rect x="1" y="8.5" width="37.5" height="3" rx="1.5" fill="#e2e2e2" stroke="#cfcfcf" stroke-width=".6"/><path d="M16 2.5h8v11l-4 4-4-4z" fill="url(#bg1)" stroke="#9a9a9a" stroke-width="1"/></svg>
<svg style="left:1639px;top:755px" width="21" height="26" viewBox="0 0 21 26"><rect x="1" y="1" width="18.5" height="10" fill="#f4f4f4" stroke="#9c9c9c" stroke-width="1"/><rect x="1" y="14.5" width="18.5" height="10" fill="#f4f4f4" stroke="#9c9c9c" stroke-width="1"/><path d="M6.5 8l3.7-3.8L14 8z" fill="#4a5ac0"/><path d="M6.5 17.5l3.7 3.8 3.8-3.8z" fill="#4a5ac0"/></svg>
<svg style="left:1675px;top:759px" width="52" height="17" viewBox="0 0 52 17"><rect x="1" y="1.5" width="50" height="14" fill="#f4f4f4" stroke="#e6e6e6" stroke-width="1"/><rect x="12.5" y="1" width="17" height="15" rx="2" fill="url(#bg1)" stroke="#9a9a9a" stroke-width="1"/><path d="M17.5 5v7M20 5v7M22.5 5v7M25 5v7" stroke="#444" stroke-width="1"/><path d="M40.5 4.5l3.5 4-3.5 4z" fill="#111"/></svg>
<svg style="left:1741px;top:755px" width="24" height="24" viewBox="0 0 24 24"><rect x="1.5" y="1" width="20" height="21" fill="#f4f4f4" stroke="#d0d0d0" stroke-width="1"/><path d="M22 2v20.5H3" fill="none" stroke="#c0c0c0" stroke-width="1"/><rect x="5" y="6" width="9" height="6" fill="#bcbcbc"/><circle cx="15" cy="14.5" r="3.8" fill="#b4b4b4"/><path d="M10 11l5-5.5 1 8z" fill="#c4c4c4"/></svg>
<svg style="left:1636px;top:783px" width="24" height="24" viewBox="0 0 24 24"><rect x="1.5" y="1.5" width="20" height="20.5" fill="#f2f2f2" stroke="#d4d4d4" stroke-width="1"/><path d="M22 2.5v20H3" fill="none" stroke="#c4c4c4" stroke-width="1"/><circle cx="11.5" cy="11.5" r="8.2" fill="#e4e4e4" stroke="#b8b8b8" stroke-width="1"/><path d="M8.5 7.5l8 4-8 4z" fill="#9a9a9a"/></svg>
<svg style="left:1626px;top:826px" width="100" height="20" viewBox="0 0 100 20"><path d="M10 1.5l8.5 8.5-8.5 8.5L1.5 10z" fill="none" stroke="#222" stroke-width="1"/><circle cx="36.5" cy="10.2" r="7.3" fill="none" stroke="#222" stroke-width="1"/><rect x="54.5" y="3.2" width="16.5" height="14" rx="5.5" fill="none" stroke="#222" stroke-width="1"/><rect x="80.7" y="3.2" width="17" height="14" fill="none" stroke="#222" stroke-width="1.2"/></svg>
<svg style="left:1628px;top:867px" width="72" height="20" viewBox="0 0 72 20"><path d="M3.5 4c1.5-2.5 5-2 5 .5 0 3-4 4.5-3.5 8 .3 2 2.5 3 4.5 2.5" fill="none" stroke="#222" stroke-width="1"/><path d="M11.5 11v6M8.5 14h6" stroke="#222" stroke-width="1"/><path d="M27 16.5c-.5-5 1-10 3-13.5h13c-2 2-4 4.5-4.5 6.5 2 2 4 4 4.5 7z" fill="none" stroke="#222" stroke-width="1.1"/><path d="M54.5 3l13 13" stroke="#222" stroke-width="1.4"/></svg>
<svg style="left:1628px;top:900px" width="120" height="18" viewBox="0 0 120 18"><path d="M3 8.5l6.5-5.5 6 7-6.5 5.5z" fill="#fff" stroke="#000" stroke-width="1.6"/><path d="M9.5 1.5l3.5 3.5M14.5 8v7" stroke="#000" stroke-width="1.8" fill="none"/><path d="M13.5 9.5c2 0 2.5 2 2.5 5.5" stroke="#000" stroke-width="2" fill="none"/><path d="M29 15.5l1.5-4 8.5-8.5 2.5 2.5-8.5 8.5z" fill="#fff" stroke="#000" stroke-width="1.4"/><path d="M29 15.5l3-1" stroke="#000" stroke-width="1.6"/><rect x="55.5" y="2.5" width="12" height="2.2" fill="#000"/><rect x="55.5" y="7" width="12" height="3.2" fill="#000"/><rect x="55.5" y="12.5" width="12" height="4" fill="#000"/></svg>
<svg style="left:1626px;top:938px" width="156" height="24" viewBox="0 0 156 24"><path d="M6 20.5l1.5-5L13 2.5l3 1.5-5.5 13z" fill="#5a7cd0" stroke="#223" stroke-width="1"/><path d="M6 20.5l1.2-4.5 3.2 1.5z" fill="#f0c080" stroke="#223" stroke-width=".8"/><path d="M29 20.5c3-.5 6-2.5 7.5-5.5l5-12 2.5 1-5 12c-1.5 3-4 5-10 4.5z" fill="#4a6ac8" stroke="#112" stroke-width="1"/><path d="M28 21h10" stroke="#112" stroke-width="1.4"/><path d="M53.5 12l8-6 7 8.5-8 6z" fill="#e8e8e8" stroke="#444" stroke-width="1.2"/><path d="M60 3.5c0-2 4-2 4 0v5" fill="none" stroke="#444" stroke-width="1.2"/><path d="M56 15c3 2 6 1 9-2l3 1c1 2 1.5 4 1 7" fill="#3a6ad0" stroke="#3a6ad0" stroke-width="1.6"/><rect x="81.5" y="8.5" width="9" height="12.5" fill="#ddd" stroke="#333" stroke-width="1.2"/><rect x="84" y="3.5" width="4" height="5" fill="#222"/><rect x="84.5" y="12" width="3" height="6" fill="#3a6ad0"/><path d="M91 3.5l2-1.5M92 6l2-.5" stroke="#888" stroke-width=".8"/><path d="M107 18.5c-.5-5 0-10 1-14h16c-2 2-4 4.5-4.5 6.5 2 2 4 4.5 4.5 7.5z" fill="none" stroke="#222" stroke-width="1.1"/><path d="M136.5 5c1.5-2.5 5-2 5 .5 0 3-4 4.5-3.5 8 .3 2 2.5 3 4.5 2.5" fill="none" stroke="#222" stroke-width="1"/><path d="M145 13v5M142.5 15.5h5" stroke="#222" stroke-width="1.2"/></svg>
<svg style="left:1626px;top:968px" width="50" height="20" viewBox="0 0 50 20"><rect x="1.5" y="2.5" width="17" height="14" fill="none" stroke="#222" stroke-width="1.1" stroke-dasharray="3 2"/><path d="M28.5 9.5l12-7h5.5v5l-12 8.5h-5.5z" fill="#e4e2b8" stroke="#555" stroke-width="1"/><path d="M28.5 9.5h5.5l12-7M34 9.5v6.5" fill="none" stroke="#555" stroke-width="1"/></svg>
<svg style="left:1628px;top:1001px" width="120" height="18" viewBox="0 0 120 18"><path d="M3 8.5l6.5-5.5 6 7-6.5 5.5z" fill="#fff" stroke="#000" stroke-width="1.6"/><path d="M9.5 1.5l3.5 3.5M14.5 8v7" stroke="#000" stroke-width="1.8" fill="none"/><path d="M13.5 9.5c2 0 2.5 2 2.5 5.5" stroke="#000" stroke-width="2" fill="none"/><path d="M29 15.5l1.5-4 8.5-8.5 2.5 2.5-8.5 8.5z" fill="#fff" stroke="#000" stroke-width="1.4"/><path d="M29 15.5l3-1" stroke="#000" stroke-width="1.6"/><rect x="55.5" y="2.5" width="12" height="2.2" fill="#000"/><rect x="55.5" y="7" width="12" height="3.2" fill="#000"/><rect x="55.5" y="12.5" width="12" height="4" fill="#000"/><g fill="#666"><rect x="84" y="3" width="3" height="3" transform="rotate(45 85.5 4.5)"/><rect x="80" y="7" width="3" height="3" transform="rotate(45 81.5 8.5)"/><rect x="88" y="7" width="3" height="3" transform="rotate(45 89.5 8.5)"/><rect x="84" y="11" width="3" height="3" transform="rotate(45 85.5 12.5)"/><rect x="84" y="7" width="3" height="3" transform="rotate(45 85.5 8.5)"/></g><path d="M113 2.5l6 6-6 6-6-6z" fill="#666"/><circle cx="113" cy="8.5" r="2" fill="#f0f0f0"/></svg>
<!-- taskbar -->
<div style="left:0;top:1030px;width:1920px;height:50px;background:linear-gradient(90deg,#3c3c3c 0,#3c3c3c 500px,#343434 640px,#262626 780px,#1d1d1d 900px,#1c1c1c 1920px)"></div>
<div style="left:0px;top:1030px;width:60px;height:50px;background:#1b1b1b;"></div>
<svg style="left:20px;top:1044.5px" width="21" height="21" viewBox="0 0 21 21"><path d="M0 3l8.5-1.2v8H0zM9.7 1.6L20.5 0v9.8H9.7zM0 11h8.5v8L0 17.8zM9.7 11h10.8v9.8L9.7 19.2z" fill="#fff"/></svg>
<div style="left:60px;top:1030px;width:430px;height:50px;background:#f2f2f2;border-top:1px solid #c9c9c9;border-bottom:1px solid #cfcfcf"></div>
<svg style="left:73px;top:1043px" width="24" height="24" viewBox="0 0 24 24"><circle cx="15" cy="9" r="6.3" fill="none" stroke="#222" stroke-width="1.5"/><path d="M10.5 13.5L2.5 21.5" stroke="#222" stroke-width="1.6"/></svg>
<span class="t" style="left:110.6px;top:1043.8px;font-size:18.5px;line-height:23px;color:#2d2d2d;letter-spacing:-0.04px;">Type here to search</span>
<svg style="left:508px;top:1043px" width="24" height="24" viewBox="0 0 24 24"><circle cx="12" cy="12" r="8.6" fill="none" stroke="#fff" stroke-width="2.6"/></svg>
<div style="left:556px;top:1042px;width:1px;height:26px;background:#6a6a6a;"></div>
<div style="left:559px;top:1042px;width:1px;height:26px;background:#5a5a5a;"></div>
<svg style="left:588px;top:1038px" width="32" height="32" viewBox="0 0 32 32"><path d="M9.5 9V7a6 6 0 0 1 12 0v2" fill="none" stroke="#e8e8e8" stroke-width="1.3"/><path d="M12 9V8a4.5 4.5 0 0 1 9 0v1" fill="none" stroke="#cfcfcf" stroke-width="1"/><path d="M1 8.5h29.5v21a1.5 1.5 0 0 1-1.5 1.5H2.5A1.5 1.5 0 0 1 1 29.5z" fill="#fff"/><rect x="9" y="14" width="6" height="6" fill="#f25022"/><rect x="16.2" y="14" width="6" height="6" fill="#7fba00"/><rect x="9" y="21.2" width="6" height="6" fill="#00a4ef"/><rect x="16.2" y="21.2" width="6" height="6" fill="#ffb900"/></svg>
<svg style="left:651px;top:1040px" width="30" height="30" viewBox="0 0 30 30"><rect width="30" height="30" rx="2.5" fill="#28323f"/><text x="15" y="20" text-anchor="middle" font-family="Liberation Sans, sans-serif" font-weight="700" font-size="25" fill="#fff">a</text><path d="M5.5 22.5c6 3.5 13 3.5 19 .5" fill="none" stroke="#fff" stroke-width="1.4"/><path d="M22 21.5l3 1-1.5 2.5" fill="none" stroke="#fff" stroke-width="1.2"/></svg>
<svg style="left:713.5px;top:1040.5px" width="29" height="29" viewBox="0 0 29 29"><circle cx="14.5" cy="14.5" r="14" fill="#fbc02d"/><path d="M14.5 14.5L2.4 7.5A14 14 0 0 1 26.6 7.5z" fill="#e04a3f"/><path d="M14.5 .5a14 14 0 0 1 12.1 7H14.5z" fill="#e04a3f"/><path d="M2.4 7.5A14 14 0 0 0 12 28.3l6-10.4-3.5-3.4z" fill="#26a05a"/><path d="M2.4 7.5l6.5 11.2 5.6-4.2z" fill="#26a05a"/><circle cx="14.5" cy="14.5" r="6.5" fill="#f4f4f4"/><circle cx="14.5" cy="14.5" r="5.2" fill="#4a8af4"/></svg>
<svg style="left:776px;top:1039px" width="28" height="30" viewBox="0 0 28 30"><path d="M2 24.5l3-5h18l3 5v4.5H2z" fill="#f28c0a"/><path d="M12 1.5h4l7 21.5c-3 2-15 2-18 0z" fill="#f6961e"/><path d="M10.3 7h7.4l1.6 5H8.7z" fill="#f2f2f2"/><path d="M7.2 16.5h13.6l1.3 4c-4 1.5-12.2 1.5-16.2 0z" fill="#f0f0f0"/></svg>
<svg style="left:837px;top:1041px" width="30" height="28" viewBox="0 0 30 28"><path d="M0 9L15 0l15 9v19H0z" fill="#1565c0"/><path d="M2.5 9.5h25v11h-25z" fill="#f4f4f4"/><path d="M0 10l15 9.5L30 10v18H0z" fill="#29b6f6"/><path d="M0 28l15-10 15 10z" fill="#1e9be0"/></svg>
<svg style="left:901px;top:1041px" width="26" height="28" viewBox="0 0 26 28"><path d="M1 13.5C2 5.5 7.5 1 14 1c7 0 11.5 5 11.5 13v2.5H9.5c.3 4 3.5 6 7.5 6 3 0 5.5-.8 7.5-2v5.5c-2.5 1.3-5.5 2-8.5 2C8 28 3.5 23.5 3.5 17c0-4 2-7.5 5.5-9.5-2 2-2.8 3.5-3 5.5h12.5c0-3.5-2-5.5-5.5-5.5-4.5 0-9 2.5-12 6z" fill="#1379d6"/></svg>
<svg style="left:961px;top:1039px" width="30" height="31" viewBox="0 0 30 31"><circle cx="15" cy="17" r="13.5" fill="#ff7a1a"/><path d="M15 3.5c3-1 5-3 5.5-3.5 1 3 4.5 5.5 6 9 3 7-1 15-6 17.5 4-5 3.5-12-1-16-1.5-2-3.5-4-4.5-7z" fill="#ffc22e"/><path d="M2 12c1-3 3-5 5-6-.5 2 0 3 1 4-3 2-5 4-6 2z" fill="#ff9a1f"/><path d="M1.8 20c2 7 9 11 16 10 5-1 9-4 10.5-9-3 4-8 6-13 5-6-1-10-3-13.5-6z" fill="#f0315c"/><circle cx="15" cy="17" r="6.8" fill="#7a3fe0"/><path d="M9 14c3-2 7-2 10 1-2-.5-4 0-5 1.5-2 0-4-1-5-2.5z" fill="#ffb02e"/></svg>
<svg style="left:1023.5px;top:1042.5px" width="29" height="24" viewBox="0 0 29 24"><path d="M1 1.5a1 1 0 0 1 1-1h8l2.5 3H1z" fill="#e0a41a"/><rect x="1" y="3.5" width="27" height="19" rx="1" fill="#fcd462"/><path d="M1 16h27v5.5a1 1 0 0 1-1 1H2a1 1 0 0 1-1-1z" fill="#f0c23c"/><path d="M6 23V13.5h17V23h-4.5v-5.5h-8V23z" fill="#3f8fe0"/></svg>
<div style="left:703px;top:1077px;width:51px;height:3px;background:#76b9ed;"></div>
<div style="left:1013px;top:1077px;width:51px;height:3px;background:#76b9ed;"></div>
<div style="left:1137px;top:1077px;width:51px;height:3px;background:#76b9ed;"></div>
<div style="left:1070px;top:1030px;width:56px;height:50px;background:#4b4b4b;"></div>
<div style="left:1126px;top:1030px;width:5px;height:50px;background:#414141;"></div>
<div style="left:1070px;top:1077px;width:61px;height:3px;background:#76b9ed;"></div>
<div style="left:1126px;top:1077px;width:1px;height:3px;background:#5c8fb8;"></div>
<svg style="left:1086px;top:1040px" width="28.2" height="31.0" viewBox="0 0 20 22"><path d="M3.5 0.5h13a3 3 0 0 1 3 3v11a3 3 0 0 1-3 3H11l-4.5 4 .6-4H3.5a3 3 0 0 1-3-3v-11a3 3 0 0 1 3-3z" fill="#2a9fd6"/><path d="M5 4.5v6.3a2.6 2.6 0 0 0 2.6 2.6h1.2M15.6 8.2a3 3 0 1 0 0 4.4" stroke="#fff" stroke-width="2" fill="none" stroke-linecap="round"/></svg>
<svg style="left:1147px;top:1043px" width="30" height="24" viewBox="0 0 30 24"><rect x=".5" y=".5" width="28" height="17.5" fill="#f0f0f0" stroke="#cfcfcf" stroke-width="1"/><rect x="5" y="3.5" width="13.5" height="9.5" fill="none" stroke="#2a3fc8" stroke-width="1.2" stroke-dasharray="2.2 1.6"/><circle cx="20.5" cy="12" r="3.8" fill="#e0282e"/><rect x="12" y="18" width="5" height="3.5" fill="#0a0a0a"/><rect x="6.5" y="21" width="16" height="1.5" fill="#0a0a0a"/></svg>
<svg style="left:1645px;top:1042px" width="30" height="30" viewBox="0 0 30 30"><circle cx="14.5" cy="14.5" r="12.8" fill="#109be0" stroke="#fff" stroke-width="2.2"/><text x="14" y="22" text-anchor="middle" font-family="Liberation Sans, sans-serif" font-weight="700" font-size="22.5" fill="#fff">?</text><circle cx="24.8" cy="20.4" r="5.8" fill="#f5a623"/><rect x="24" y="18.8" width="1.7" height="4.8" fill="#fff"/><rect x="24" y="16.6" width="1.7" height="1.5" fill="#fff"/></svg>
<svg style="left:1686px;top:1049px" width="18" height="12" viewBox="0 0 18 12"><path d="M1 10l8-8 8 8" fill="none" stroke="#fff" stroke-width="1.3"/></svg>
<svg style="left:1714px;top:1045px" width="23" height="20" viewBox="0 0 23 20"><path d="M1 6.5h3.5l4.5-4.5v16l-4.5-4.5H1z" fill="none" stroke="#fff" stroke-width="1.2"/><path d="M12 7.5a3.5 3.5 0 0 1 0 5M14.8 4.8a7.5 7.5 0 0 1 0 10.4M17.8 2a11.5 11.5 0 0 1 0 16" fill="none" stroke="#fff" stroke-width="1.2"/></svg>
<svg style="left:1744px;top:1046px" width="23" height="17" viewBox="0 0 23 17"><rect x="5.5" y="4.8" width="14.2" height="9.6" fill="none" stroke="#fff" stroke-width="1"/><rect x="7" y="6.3" width="11.2" height="6.6" fill="#f2f2f2"/><rect x="20.2" y="7.6" width="1.4" height="4" fill="#fff"/><path d="M1.8 .8v2.4M4.4 .8v2.4M.8 3.2h4.6v1.8a1.5 1.5 0 0 1-1.5 1.5h-1.6a1.5 1.5 0 0 1-1.5-1.5zM3.1 6.5v3.5" fill="none" stroke="#fff" stroke-width="1"/></svg>
<span class="t" style="left:1786.0px;top:1034.7px;font-size:14.75px;line-height:18px;color:#fff;letter-spacing:-0.58px;will-change:opacity;">2:04 PM</span>
<span class="t" style="left:1778.6px;top:1057.7px;font-size:14.75px;line-height:18px;color:#fff;letter-spacing:0.22px;will-change:opacity;">3/26/2020</span>
<svg style="left:1868px;top:1044px" width="32" height="32" viewBox="0 0 32 32"><path d="M1 1h20v16.5H9.5L5.5 21.5v-4H1z" fill="#fff"/><path d="M4 5h14M4 8.5h14M4 12h14" stroke="#1d1d1d" stroke-width="1.2"/><circle cx="20.3" cy="20.5" r="9.5" fill="#2d2d2d" stroke="#777" stroke-width="1"/><text x="20.3" y="25.5" text-anchor="middle" font-family="Liberation Sans, sans-serif" font-size="14" fill="#fff">1</text></svg>
<div style="left:1914px;top:1030px;width:1px;height:50px;background:#5a5a5a;"></div>
</body></html>
